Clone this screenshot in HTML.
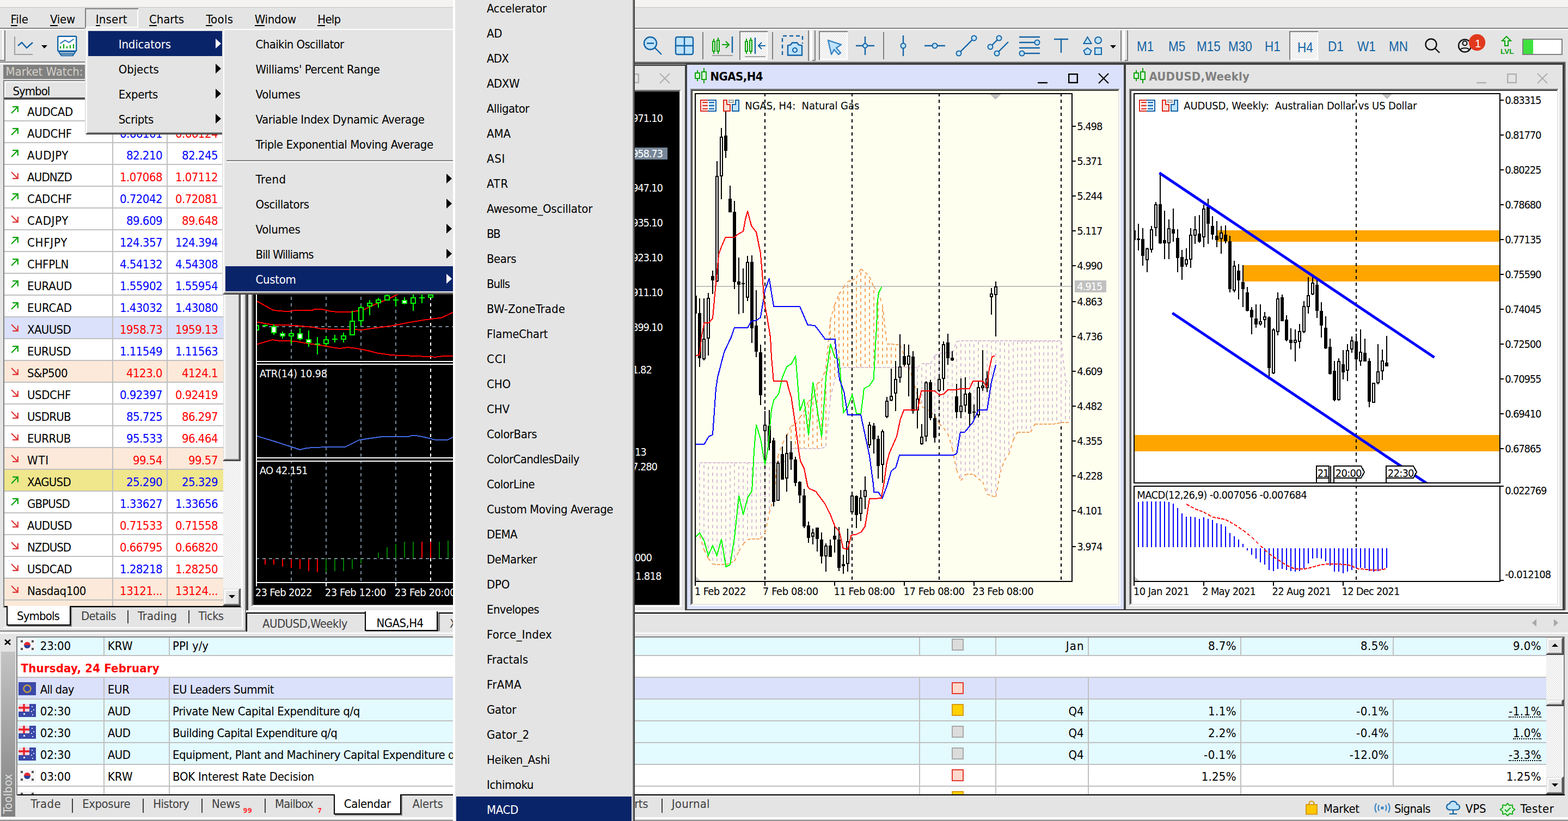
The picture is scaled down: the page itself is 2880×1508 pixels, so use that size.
<!DOCTYPE html>
<html lang="en"><head><meta charset="utf-8"><title>MetaTrader 5</title>
<style>
*{margin:0;padding:0;box-sizing:content-box}
html,body{width:2880px;height:1508px;overflow:hidden;background:#e4e4e4}
body{position:relative;font-family:'DejaVu Sans Condensed','Liberation Sans',sans-serif;font-size:22px;line-height:22px;color:#000;
 -webkit-font-smoothing:none;text-rendering:optimizeSpeed}
div,span,svg{position:absolute}
svg{overflow:visible}
.t{white-space:nowrap}
.c{font-size:20px;line-height:20px}
</style></head>
<body>
<div style="left:0px;top:0px;width:2880px;height:13px;background:#f5f2f2;"></div>
<div style="left:0px;top:12.5px;width:2880px;height:1.5px;background:#c4c4c4;"></div>
<div style="left:0px;top:14px;width:2880px;height:38px;background:#e4e4e4;"></div>
<div style="left:0px;top:51px;width:2880px;height:2px;background:#808080;"></div>
<div style="left:0px;top:53px;width:2880px;height:2px;background:#ffffff;"></div>
<div style="left:156px;top:15px;width:98px;height:36px;background:#e4e4e4;box-shadow:inset 2px 2px 0 #808080, inset -2px -2px 0 #fff;"></div>
<span class="t" style="top:24.6px;left:19.6px;letter-spacing:-0.24px;">File</span>
<div style="left:19.6px;top:45.9px;width:12px;height:2px;background:#000;"></div>
<span class="t" style="top:24.6px;left:92px;letter-spacing:-0.23px;">View</span>
<div style="left:92px;top:45.9px;width:14px;height:2px;background:#000;"></div>
<span class="t" style="top:24.6px;left:175.8px;letter-spacing:0.21px;">Insert</span>
<div style="left:175.8px;top:45.9px;width:8px;height:2px;background:#000;"></div>
<span class="t" style="top:24.6px;left:274px;letter-spacing:-0.12px;">Charts</span>
<div style="left:274px;top:45.9px;width:14px;height:2px;background:#000;"></div>
<span class="t" style="top:24.6px;left:378.4px;letter-spacing:0.33px;">Tools</span>
<div style="left:378.4px;top:45.9px;width:12px;height:2px;background:#000;"></div>
<span class="t" style="top:24.6px;left:467.8px;letter-spacing:-0.33px;">Window</span>
<div style="left:467.8px;top:45.9px;width:18px;height:2px;background:#000;"></div>
<span class="t" style="top:24.6px;left:583.3px;letter-spacing:-0.79px;">Help</span>
<div style="left:583.3px;top:45.9px;width:14px;height:2px;background:#000;"></div>
<div style="left:0px;top:55px;width:2880px;height:58px;background:#e4e4e4;"></div>
<div style="left:4px;top:56px;width:2px;height:56px;background:#fff;"></div><div style="left:8px;top:56px;width:2px;height:56px;background:#808080;"></div><div style="left:0px;top:110px;width:8px;height:2px;background:#808080;"></div>
<div style="left:1358px;top:57px;width:52px;height:53px;background:repeating-conic-gradient(#fff 0 25%,#e4e4e4 0 50%) 0 0/4px 4px;box-shadow:inset 2px 2px 0 #808080, inset -2px -2px 0 #fff;"></div>
<div style="left:1504px;top:57px;width:53px;height:53px;background:repeating-conic-gradient(#fff 0 25%,#e4e4e4 0 50%) 0 0/4px 4px;box-shadow:inset 2px 2px 0 #808080, inset -2px -2px 0 #fff;"></div>
<div style="left:2368px;top:57px;width:53px;height:53px;background:repeating-conic-gradient(#fff 0 25%,#e4e4e4 0 50%) 0 0/4px 4px;box-shadow:inset 2px 2px 0 #808080, inset -2px -2px 0 #fff;"></div>
<div style="left:1290px;top:59px;width:2px;height:50px;background:#808080;"></div>
<div style="left:1418px;top:59px;width:2px;height:50px;background:#808080;"></div>
<div style="left:1622px;top:59px;width:2px;height:50px;background:#808080;"></div>
<div style="left:1484px;top:56px;width:2px;height:56px;background:#808080;"></div><div style="left:1488px;top:56px;width:4px;height:54px;background:#fff;"></div><div style="left:1492px;top:110px;width:4px;height:2px;background:#808080;"></div><div style="left:1496px;top:56px;width:2px;height:56px;background:#808080;"></div>
<div style="left:2058px;top:56px;width:2px;height:56px;background:#808080;"></div><div style="left:2062px;top:56px;width:4px;height:54px;background:#fff;"></div><div style="left:2066px;top:110px;width:4px;height:2px;background:#808080;"></div><div style="left:2070px;top:56px;width:2px;height:56px;background:#808080;"></div>
<svg style="left:0;top:55px" width="2880" height="58" viewBox="0 55 2880 58" fill="none" stroke-linecap="butt"><path d="M27 67V100H60" stroke="#a0a0a0" stroke-width="2"/><path d="M33 84L40 78L49 88L60 78" stroke="#1464a5" stroke-width="2.4"/><path d="M76 83H87L81.5 89Z" fill="#000"/><rect x="106.2" y="66.7" width="34" height="27" rx="1.5" fill="#fff" stroke="#1464a5" stroke-width="2.4"/><path d="M108 95.200h30.400l-2 3.600h-26.400z" fill="#fdeee6" stroke="#1464a5" stroke-width="2"/><path d="M111 99.200h24.400l-1.500 3h-21.400z" fill="#fdeee6" stroke="#1464a5" stroke-width="2"/><path d="M110.500 80l8.800-6 7.400 4 8.700-6.300" stroke="#3a7fc0" stroke-width="2.2"/><path d="M111 89v-4M117 89v-8M123 89v-4M129 89v-6M135 89v-8" stroke="#0da20d" stroke-width="2.2"/><circle cx="1194.5" cy="79.5" r="11.5" fill="#bfe3fb" stroke="#1464a5" stroke-width="2.4"/><path d="M1203 88l12 12M1188 79.5h13" stroke="#1464a5" stroke-width="2.4"/><rect x="1241" y="68" width="32" height="32" rx="3" fill="#bfe3fb" stroke="#1464a5" stroke-width="2.4"/><path d="M1257 68v32M1241 84h32" stroke="#1464a5" stroke-width="2.4"/><path d="M1311 71v28M1319 69v30" stroke="#0da20d" stroke-width="2"/><rect x="1309" y="76" width="4" height="18" fill="#d8f5d8" stroke="#0da20d" stroke-width="2"/><rect x="1317" y="74" width="4" height="20" fill="#d8f5d8" stroke="#0da20d" stroke-width="2"/><path d="M1326 82h13M1333 76l6 6-6 6" stroke="#0da20d" stroke-width="2.2"/><path d="M1345 67v30" stroke="#1464a5" stroke-width="2.4"/><path d="M1308 102h38" stroke="#a0a0a0" stroke-width="2"/><path d="M1371 71v28M1379 69v30" stroke="#0da20d" stroke-width="2"/><rect x="1369" y="76" width="4" height="18" fill="#d8f5d8" stroke="#0da20d" stroke-width="2"/><rect x="1377" y="74" width="4" height="20" fill="#d8f5d8" stroke="#0da20d" stroke-width="2"/><path d="M1387 69v30" stroke="#1464a5" stroke-width="2.4"/><path d="M1393 84h13M1399 78l-6 6 6 6" stroke="#1464a5" stroke-width="2.2"/><path d="M1368 104h38" stroke="#a0a0a0" stroke-width="2"/><path d="M1437 101V66h37v14" stroke="#1464a5" stroke-width="2.4" stroke-dasharray="7 5"/><path d="M1447 101.5h26v-18l-6-1-3-4h-9l-3 4-5 1z" fill="#bfe3fb" stroke="#1464a5" stroke-width="2.4"/><circle cx="1460" cy="92" r="4" fill="#bfe3fb" stroke="#1464a5" stroke-width="2.2"/><path d="M1521 74l24 8-9 6 8 9-4 3-8-9-5 9z" fill="#bfe3fb" stroke="#3a86c4" stroke-width="2.4" stroke-linejoin="round"/><path d="M1572 84h34M1589 67v34" stroke="#1464a5" stroke-width="2.4"/><circle cx="1589" cy="84" r="4" fill="#bfe3fb" stroke="#1464a5" stroke-width="2"/><path d="M1659 65v38" stroke="#1464a5" stroke-width="2.4"/><circle cx="1659" cy="84" r="4.5" fill="#bfe3fb" stroke="#1464a5" stroke-width="2"/><path d="M1698 84h38" stroke="#1464a5" stroke-width="2.4"/><circle cx="1717" cy="84" r="4.5" fill="#bfe3fb" stroke="#1464a5" stroke-width="2"/><path d="M1761 98L1789 70" stroke="#1464a5" stroke-width="2.4"/><circle cx="1761" cy="98" r="4.5" fill="#bfe3fb" stroke="#1464a5" stroke-width="2"/><circle cx="1789" cy="70" r="4.5" fill="#bfe3fb" stroke="#1464a5" stroke-width="2"/><path d="M1819 86L1835 70M1831 98L1852 77" stroke="#1464a5" stroke-width="2.4"/><circle cx="1819" cy="86" r="4.5" fill="#bfe3fb" stroke="#1464a5" stroke-width="2"/><circle cx="1835" cy="70" r="4.5" fill="#bfe3fb" stroke="#1464a5" stroke-width="2"/><circle cx="1831" cy="98" r="4.5" fill="#bfe3fb" stroke="#1464a5" stroke-width="2"/><path d="M1872 68h38M1872 78h38M1872 88h38M1872 98h38" stroke="#1464a5" stroke-width="2.4"/><circle cx="1905" cy="78" r="4.5" fill="#bfe3fb" stroke="#1464a5" stroke-width="2"/><circle cx="1877" cy="98" r="4.5" fill="#bfe3fb" stroke="#1464a5" stroke-width="2"/><path d="M1936 72h26M1949 72v25" stroke="#1464a5" stroke-width="2.4"/><path d="M1997.5 68l7 12h-14z" fill="#bfe3fb" stroke="#1464a5" stroke-width="2"/><circle cx="2017" cy="74" r="6" fill="#bfe3fb" stroke="#1464a5" stroke-width="2"/><path d="M1997.5 88l7 5-3 7h-8l-3-7z" fill="#bfe3fb" stroke="#1464a5" stroke-width="2"/><rect x="2011" y="88" width="12" height="12" fill="#bfe3fb" stroke="#1464a5" stroke-width="2"/><path d="M2039 83H2050L2044.5 89Z" fill="#000"/><circle cx="2628.5" cy="81.5" r="10" stroke="#111" stroke-width="2.4"/><path d="M2636 89l8 8" stroke="#111" stroke-width="2.4"/><circle cx="2690.5" cy="84" r="11.5" stroke="#111" stroke-width="2.4"/><circle cx="2690.5" cy="79.5" r="4" stroke="#111" stroke-width="2.2"/><path d="M2682 92c2-5 15-5 17 0" stroke="#111" stroke-width="2.2"/><circle cx="2713" cy="78" r="15.2" fill="#e0391d"/><path d="M2767 67l8 8h-5v9h-6v-9h-5z" fill="#d8f5d8" stroke="#0da20d" stroke-width="2"/></svg>
<span class="t" style="top:72.6px;left:2088px;color:#1464a5;font-size:25px;line-height:25px;font-family:'Liberation Sans',sans-serif;transform:scaleX(0.9);transform-origin:0 0;">M1</span>
<span class="t" style="top:72.6px;left:2146px;color:#1464a5;font-size:25px;line-height:25px;font-family:'Liberation Sans',sans-serif;transform:scaleX(0.9);transform-origin:0 0;">M5</span>
<span class="t" style="top:72.6px;left:2198px;color:#1464a5;font-size:25px;line-height:25px;font-family:'Liberation Sans',sans-serif;transform:scaleX(0.9);transform-origin:0 0;">M15</span>
<span class="t" style="top:72.6px;left:2256px;color:#1464a5;font-size:25px;line-height:25px;font-family:'Liberation Sans',sans-serif;transform:scaleX(0.9);transform-origin:0 0;">M30</span>
<span class="t" style="top:72.6px;left:2323px;color:#1464a5;font-size:25px;line-height:25px;font-family:'Liberation Sans',sans-serif;transform:scaleX(0.9);transform-origin:0 0;">H1</span>
<span class="t" style="top:74.6px;left:2383px;color:#1464a5;font-size:25px;line-height:25px;font-family:'Liberation Sans',sans-serif;transform:scaleX(0.9);transform-origin:0 0;">H4</span>
<span class="t" style="top:72.6px;left:2438.5px;color:#1464a5;font-size:25px;line-height:25px;font-family:'Liberation Sans',sans-serif;transform:scaleX(0.9);transform-origin:0 0;">D1</span>
<span class="t" style="top:72.6px;left:2493px;color:#1464a5;font-size:25px;line-height:25px;font-family:'Liberation Sans',sans-serif;transform:scaleX(0.9);transform-origin:0 0;">W1</span>
<span class="t" style="top:72.6px;left:2550.5px;color:#1464a5;font-size:25px;line-height:25px;font-family:'Liberation Sans',sans-serif;transform:scaleX(0.9);transform-origin:0 0;">MN</span>
<span class="t" style="top:69.9px;left:2709px;color:#fff;font-size:20px;line-height:20px;font-family:'Liberation Sans',sans-serif;">1</span>
<span class="t" style="top:88.4px;left:2756px;color:#0da20d;font-size:13.5px;line-height:13.5px;font-weight:bold;font-family:'Liberation Sans',sans-serif;">LVL</span>
<div style="left:2796px;top:71px;width:74px;height:30px;background:#fff;border:2px solid #808080;box-sizing:border-box;"></div>
<div style="left:2798px;top:73px;width:18px;height:26px;background:#3fe13f;"></div>
<div style="left:0px;top:113px;width:2880px;height:2px;background:#808080;"></div>
<div style="left:0px;top:115px;width:452px;height:1053px;background:#e4e4e4;"></div>
<div style="left:0px;top:115px;width:452px;height:3px;background:#fff;"></div>
<div style="left:6px;top:119px;width:440px;height:26px;background:#808080;"></div>
<span class="t" style="top:121.2px;left:10.5px;color:#d4d0c8;letter-spacing:-0.03px;">Market Watch:</span>
<div style="left:6px;top:147px;width:440px;height:970px;background:#808080;"></div>
<div style="left:8px;top:149px;width:436px;height:966px;background:#fff;"></div>
<div style="left:8px;top:149px;width:436px;height:31px;background:#e4e4e4;box-shadow:inset 2px 2px 0 #fff;"></div>
<span class="t" style="top:156.7px;left:23.4px;letter-spacing:-0.96px;">Symbol</span>
<div style="left:8px;top:179px;width:436px;height:4px;background:#505050;"></div>
<div style="left:8px;top:221px;width:402px;height:2px;background:#c0c0c0;"></div>
<svg style="left:20px;top:195px" width="14" height="14" viewBox="0 0 14 14"><path d="M1 13L12 2M3 1.2H12.8V11" fill="none" stroke="#0da20d" stroke-width="2.2"/></svg>
<span class="t" style="top:194.5px;left:50px;letter-spacing:-0.31px;">AUDCAD</span>
<span class="t" style="top:194.5px;right:2582.0px;color:#0000ff;letter-spacing:-0.55px;">0.92161</span>
<span class="t" style="top:194.5px;right:2480.0px;color:#0000ff;letter-spacing:-0.55px;">0.92202</span>
<div style="left:8px;top:261px;width:402px;height:2px;background:#c0c0c0;"></div>
<svg style="left:20px;top:235px" width="14" height="14" viewBox="0 0 14 14"><path d="M1 13L12 2M3 1.2H12.8V11" fill="none" stroke="#0da20d" stroke-width="2.2"/></svg>
<span class="t" style="top:234.5px;left:50px;letter-spacing:-0.23px;">AUDCHF</span>
<span class="t" style="top:234.5px;right:2582.0px;color:#0000ff;letter-spacing:-0.55px;">0.66101</span>
<span class="t" style="top:234.5px;right:2480.0px;color:#ff0000;letter-spacing:-0.55px;">0.66124</span>
<div style="left:8px;top:301px;width:402px;height:2px;background:#c0c0c0;"></div>
<svg style="left:20px;top:275px" width="14" height="14" viewBox="0 0 14 14"><path d="M1 13L12 2M3 1.2H12.8V11" fill="none" stroke="#0da20d" stroke-width="2.2"/></svg>
<span class="t" style="top:274.5px;left:50px;letter-spacing:0.56px;">AUDJPY</span>
<span class="t" style="top:274.5px;right:2582.0px;color:#0000ff;letter-spacing:-0.54px;">82.210</span>
<span class="t" style="top:274.5px;right:2480.0px;color:#0000ff;letter-spacing:-0.54px;">82.245</span>
<div style="left:8px;top:341px;width:402px;height:2px;background:#c0c0c0;"></div>
<svg style="left:20px;top:315px" width="14" height="14" viewBox="0 0 14 14"><path d="M1 1L12 12M3 12.8H12.8V3" fill="none" stroke="#e0393a" stroke-width="2.2"/></svg>
<span class="t" style="top:314.5px;left:50px;letter-spacing:-0.81px;">AUDNZD</span>
<span class="t" style="top:314.5px;right:2582.0px;color:#ff0000;letter-spacing:-0.55px;">1.07068</span>
<span class="t" style="top:314.5px;right:2480.0px;color:#ff0000;letter-spacing:-0.55px;">1.07112</span>
<div style="left:8px;top:381px;width:402px;height:2px;background:#c0c0c0;"></div>
<svg style="left:20px;top:355px" width="14" height="14" viewBox="0 0 14 14"><path d="M1 13L12 2M3 1.2H12.8V11" fill="none" stroke="#0da20d" stroke-width="2.2"/></svg>
<span class="t" style="top:354.5px;left:50px;letter-spacing:-0.12px;">CADCHF</span>
<span class="t" style="top:354.5px;right:2582.0px;color:#0000ff;letter-spacing:-0.55px;">0.72042</span>
<span class="t" style="top:354.5px;right:2480.0px;color:#ff0000;letter-spacing:-0.55px;">0.72081</span>
<div style="left:8px;top:421px;width:402px;height:2px;background:#c0c0c0;"></div>
<svg style="left:20px;top:395px" width="14" height="14" viewBox="0 0 14 14"><path d="M1 1L12 12M3 12.8H12.8V3" fill="none" stroke="#e0393a" stroke-width="2.2"/></svg>
<span class="t" style="top:394.5px;left:50px;letter-spacing:0.67px;">CADJPY</span>
<span class="t" style="top:394.5px;right:2582.0px;color:#0000ff;letter-spacing:-0.54px;">89.609</span>
<span class="t" style="top:394.5px;right:2480.0px;color:#ff0000;letter-spacing:-0.54px;">89.648</span>
<div style="left:8px;top:461px;width:402px;height:2px;background:#c0c0c0;"></div>
<svg style="left:20px;top:435px" width="14" height="14" viewBox="0 0 14 14"><path d="M1 13L12 2M3 1.2H12.8V11" fill="none" stroke="#0da20d" stroke-width="2.2"/></svg>
<span class="t" style="top:434.5px;left:50px;letter-spacing:0.75px;">CHFJPY</span>
<span class="t" style="top:434.5px;right:2582.0px;color:#0000ff;letter-spacing:-0.55px;">124.357</span>
<span class="t" style="top:434.5px;right:2480.0px;color:#0000ff;letter-spacing:-0.55px;">124.394</span>
<div style="left:8px;top:501px;width:402px;height:2px;background:#c0c0c0;"></div>
<svg style="left:20px;top:475px" width="14" height="14" viewBox="0 0 14 14"><path d="M1 13L12 2M3 1.2H12.8V11" fill="none" stroke="#0da20d" stroke-width="2.2"/></svg>
<span class="t" style="top:474.5px;left:50px;letter-spacing:-0.31px;">CHFPLN</span>
<span class="t" style="top:474.5px;right:2582.0px;color:#0000ff;letter-spacing:-0.55px;">4.54132</span>
<span class="t" style="top:474.5px;right:2480.0px;color:#0000ff;letter-spacing:-0.55px;">4.54308</span>
<div style="left:8px;top:541px;width:402px;height:2px;background:#c0c0c0;"></div>
<svg style="left:20px;top:515px" width="14" height="14" viewBox="0 0 14 14"><path d="M1 13L12 2M3 1.2H12.8V11" fill="none" stroke="#0da20d" stroke-width="2.2"/></svg>
<span class="t" style="top:514.5px;left:50px;letter-spacing:-0.19px;">EURAUD</span>
<span class="t" style="top:514.5px;right:2582.0px;color:#0000ff;letter-spacing:-0.55px;">1.55902</span>
<span class="t" style="top:514.5px;right:2480.0px;color:#0000ff;letter-spacing:-0.55px;">1.55954</span>
<div style="left:8px;top:581px;width:402px;height:2px;background:#c0c0c0;"></div>
<svg style="left:20px;top:555px" width="14" height="14" viewBox="0 0 14 14"><path d="M1 13L12 2M3 1.2H12.8V11" fill="none" stroke="#0da20d" stroke-width="2.2"/></svg>
<span class="t" style="top:554.5px;left:50px;letter-spacing:-0.04px;">EURCAD</span>
<span class="t" style="top:554.5px;right:2582.0px;color:#0000ff;letter-spacing:-0.55px;">1.43032</span>
<span class="t" style="top:554.5px;right:2480.0px;color:#0000ff;letter-spacing:-0.55px;">1.43080</span>
<div style="left:8px;top:583px;width:402px;height:38px;background:#dbe1fb;"></div>
<div style="left:8px;top:621px;width:402px;height:2px;background:#c0c0c0;"></div>
<svg style="left:20px;top:595px" width="14" height="14" viewBox="0 0 14 14"><path d="M1 1L12 12M3 12.8H12.8V3" fill="none" stroke="#e0393a" stroke-width="2.2"/></svg>
<span class="t" style="top:594.5px;left:50px;letter-spacing:-0.65px;">XAUUSD</span>
<span class="t" style="top:594.5px;right:2582.0px;color:#ff0000;letter-spacing:-0.55px;">1958.73</span>
<span class="t" style="top:594.5px;right:2480.0px;color:#ff0000;letter-spacing:-0.55px;">1959.13</span>
<div style="left:8px;top:661px;width:402px;height:2px;background:#c0c0c0;"></div>
<svg style="left:20px;top:635px" width="14" height="14" viewBox="0 0 14 14"><path d="M1 13L12 2M3 1.2H12.8V11" fill="none" stroke="#0da20d" stroke-width="2.2"/></svg>
<span class="t" style="top:634.5px;left:50px;letter-spacing:-0.51px;">EURUSD</span>
<span class="t" style="top:634.5px;right:2582.0px;color:#0000ff;letter-spacing:-0.55px;">1.11549</span>
<span class="t" style="top:634.5px;right:2480.0px;color:#0000ff;letter-spacing:-0.55px;">1.11563</span>
<div style="left:8px;top:663px;width:402px;height:38px;background:#fce9d9;"></div>
<div style="left:8px;top:701px;width:402px;height:2px;background:#c0c0c0;"></div>
<svg style="left:20px;top:675px" width="14" height="14" viewBox="0 0 14 14"><path d="M1 1L12 12M3 12.8H12.8V3" fill="none" stroke="#e0393a" stroke-width="2.2"/></svg>
<span class="t" style="top:674.5px;left:50px;letter-spacing:-0.62px;">S&amp;P500</span>
<span class="t" style="top:674.5px;right:2582.0px;color:#ff0000;letter-spacing:-0.54px;">4123.0</span>
<span class="t" style="top:674.5px;right:2480.0px;color:#ff0000;letter-spacing:-0.54px;">4124.1</span>
<div style="left:8px;top:741px;width:402px;height:2px;background:#c0c0c0;"></div>
<svg style="left:20px;top:715px" width="14" height="14" viewBox="0 0 14 14"><path d="M1 1L12 12M3 12.8H12.8V3" fill="none" stroke="#e0393a" stroke-width="2.2"/></svg>
<span class="t" style="top:714.5px;left:50px;letter-spacing:-0.40px;">USDCHF</span>
<span class="t" style="top:714.5px;right:2582.0px;color:#0000ff;letter-spacing:-0.55px;">0.92397</span>
<span class="t" style="top:714.5px;right:2480.0px;color:#ff0000;letter-spacing:-0.55px;">0.92419</span>
<div style="left:8px;top:781px;width:402px;height:2px;background:#c0c0c0;"></div>
<svg style="left:20px;top:755px" width="14" height="14" viewBox="0 0 14 14"><path d="M1 1L12 12M3 12.8H12.8V3" fill="none" stroke="#e0393a" stroke-width="2.2"/></svg>
<span class="t" style="top:754.5px;left:50px;letter-spacing:-0.69px;">USDRUB</span>
<span class="t" style="top:754.5px;right:2582.0px;color:#0000ff;letter-spacing:-0.54px;">85.725</span>
<span class="t" style="top:754.5px;right:2480.0px;color:#ff0000;letter-spacing:-0.54px;">86.297</span>
<div style="left:8px;top:821px;width:402px;height:2px;background:#c0c0c0;"></div>
<svg style="left:20px;top:795px" width="14" height="14" viewBox="0 0 14 14"><path d="M1 1L12 12M3 12.8H12.8V3" fill="none" stroke="#e0393a" stroke-width="2.2"/></svg>
<span class="t" style="top:794.5px;left:50px;letter-spacing:-0.43px;">EURRUB</span>
<span class="t" style="top:794.5px;right:2582.0px;color:#0000ff;letter-spacing:-0.54px;">95.533</span>
<span class="t" style="top:794.5px;right:2480.0px;color:#ff0000;letter-spacing:-0.54px;">96.464</span>
<div style="left:8px;top:823px;width:402px;height:38px;background:#fce9d9;"></div>
<div style="left:8px;top:861px;width:402px;height:2px;background:#c0c0c0;"></div>
<svg style="left:20px;top:835px" width="14" height="14" viewBox="0 0 14 14"><path d="M1 1L12 12M3 12.8H12.8V3" fill="none" stroke="#e0393a" stroke-width="2.2"/></svg>
<span class="t" style="top:834.5px;left:50px;letter-spacing:0.83px;">WTI</span>
<span class="t" style="top:834.5px;right:2582.0px;color:#ff0000;letter-spacing:-0.53px;">99.54</span>
<span class="t" style="top:834.5px;right:2480.0px;color:#ff0000;letter-spacing:-0.53px;">99.57</span>
<div style="left:8px;top:863px;width:402px;height:38px;background:#f0e68c;"></div>
<div style="left:8px;top:901px;width:402px;height:2px;background:#c0c0c0;"></div>
<svg style="left:20px;top:875px" width="14" height="14" viewBox="0 0 14 14"><path d="M1 13L12 2M3 1.2H12.8V11" fill="none" stroke="#0da20d" stroke-width="2.2"/></svg>
<span class="t" style="top:874.5px;left:50px;letter-spacing:-0.73px;">XAGUSD</span>
<span class="t" style="top:874.5px;right:2582.0px;color:#0000ff;letter-spacing:-0.54px;">25.290</span>
<span class="t" style="top:874.5px;right:2480.0px;color:#0000ff;letter-spacing:-0.54px;">25.329</span>
<div style="left:8px;top:941px;width:402px;height:2px;background:#c0c0c0;"></div>
<svg style="left:20px;top:915px" width="14" height="14" viewBox="0 0 14 14"><path d="M1 13L12 2M3 1.2H12.8V11" fill="none" stroke="#0da20d" stroke-width="2.2"/></svg>
<span class="t" style="top:914.5px;left:50px;letter-spacing:-0.86px;">GBPUSD</span>
<span class="t" style="top:914.5px;right:2582.0px;color:#0000ff;letter-spacing:-0.55px;">1.33627</span>
<span class="t" style="top:914.5px;right:2480.0px;color:#0000ff;letter-spacing:-0.55px;">1.33656</span>
<div style="left:8px;top:981px;width:402px;height:2px;background:#c0c0c0;"></div>
<svg style="left:20px;top:955px" width="14" height="14" viewBox="0 0 14 14"><path d="M1 1L12 12M3 12.8H12.8V3" fill="none" stroke="#e0393a" stroke-width="2.2"/></svg>
<span class="t" style="top:954.5px;left:50px;letter-spacing:-0.60px;">AUDUSD</span>
<span class="t" style="top:954.5px;right:2582.0px;color:#ff0000;letter-spacing:-0.55px;">0.71533</span>
<span class="t" style="top:954.5px;right:2480.0px;color:#ff0000;letter-spacing:-0.55px;">0.71558</span>
<div style="left:8px;top:1021px;width:402px;height:2px;background:#c0c0c0;"></div>
<svg style="left:20px;top:995px" width="14" height="14" viewBox="0 0 14 14"><path d="M1 1L12 12M3 12.8H12.8V3" fill="none" stroke="#e0393a" stroke-width="2.2"/></svg>
<span class="t" style="top:994.5px;left:50px;letter-spacing:-0.98px;">NZDUSD</span>
<span class="t" style="top:994.5px;right:2582.0px;color:#ff0000;letter-spacing:-0.55px;">0.66795</span>
<span class="t" style="top:994.5px;right:2480.0px;color:#ff0000;letter-spacing:-0.55px;">0.66820</span>
<div style="left:8px;top:1061px;width:402px;height:2px;background:#c0c0c0;"></div>
<svg style="left:20px;top:1035px" width="14" height="14" viewBox="0 0 14 14"><path d="M1 1L12 12M3 12.8H12.8V3" fill="none" stroke="#e0393a" stroke-width="2.2"/></svg>
<span class="t" style="top:1034.5px;left:50px;letter-spacing:-0.48px;">USDCAD</span>
<span class="t" style="top:1034.5px;right:2582.0px;color:#0000ff;letter-spacing:-0.55px;">1.28218</span>
<span class="t" style="top:1034.5px;right:2480.0px;color:#ff0000;letter-spacing:-0.55px;">1.28250</span>
<div style="left:8px;top:1063px;width:402px;height:38px;background:#fce9d9;"></div>
<div style="left:8px;top:1101px;width:402px;height:2px;background:#c0c0c0;"></div>
<svg style="left:20px;top:1075px" width="14" height="14" viewBox="0 0 14 14"><path d="M1 1L12 12M3 12.8H12.8V3" fill="none" stroke="#e0393a" stroke-width="2.2"/></svg>
<span class="t" style="top:1074.5px;left:50px;letter-spacing:-0.48px;">Nasdaq100</span>
<span class="t" style="top:1074.5px;right:2582.0px;color:#ff0000;letter-spacing:-0.48px;">13121...</span>
<span class="t" style="top:1074.5px;right:2480.0px;color:#ff0000;letter-spacing:-0.48px;">13124...</span>
<div style="left:8px;top:1103px;width:402px;height:10px;background:#fce9d9;"></div>
<div style="left:206px;top:183px;width:2px;height:930px;background:#c0c0c0;"></div>
<div style="left:306px;top:183px;width:2px;height:930px;background:#c0c0c0;"></div>
<div style="left:410px;top:183px;width:32px;height:930px;background:repeating-conic-gradient(#fff 0 25%,#e4e4e4 0 50%) 0 0/4px 4px;"></div>
<div style="left:410px;top:183px;width:32px;height:664px;background:#e4e4e4;box-shadow:inset -2px -2px 0 #404040, inset 2px 2px 0 #e4e4e4, inset -4px -4px 0 #808080, inset 4px 4px 0 #fff;"></div>
<div style="left:410px;top:1081px;width:32px;height:32px;background:#e4e4e4;box-shadow:inset -2px -2px 0 #404040, inset 2px 2px 0 #e4e4e4, inset -4px -4px 0 #808080, inset 4px 4px 0 #fff;"></div>
<svg style="left:418px;top:1092px" width="16" height="10"><path d="M2 1H14L8 7Z" fill="#000"/></svg>
<div style="left:8px;top:1113px;width:434px;height:2px;background:#000;"></div>
<div style="left:6px;top:1116px;width:440px;height:36px;background:#e4e4e4;"></div>
<div style="left:12px;top:1113px;width:118px;height:36px;background:#fff;border:2px solid #000;border-top:none;box-sizing:border-box;box-shadow:2px 2px 0 #808080;"></div>
<span class="t" style="top:1121.2px;left:31px;letter-spacing:-0.86px;">Symbols</span>
<span class="t" style="top:1121.2px;left:149px;color:#404040;letter-spacing:-0.66px;">Details</span>
<span class="t" style="top:1121.2px;left:253px;color:#404040;letter-spacing:-0.04px;">Trading</span>
<span class="t" style="top:1121.2px;left:364.5px;color:#404040;letter-spacing:-0.72px;">Ticks</span>
<div style="left:234px;top:1121px;width:2px;height:24px;background:#404040;"></div>
<div style="left:346px;top:1121px;width:2px;height:24px;background:#404040;"></div>
<div style="left:444px;top:119px;width:2px;height:1034px;background:#fff;"></div>
<div style="left:6px;top:1152px;width:440px;height:2px;background:#fff;"></div>
<div style="left:0px;top:1158px;width:452px;height:2px;background:#808080;"></div>
<div style="left:450px;top:115px;width:2px;height:1045px;background:#808080;"></div>
<div style="left:452px;top:113px;width:2428px;height:2px;background:#909090;"></div>
<div style="left:452px;top:115px;width:2428px;height:1006px;background:#404040;"></div>
<div style="left:2874px;top:115px;width:2px;height:1006px;background:#808080;"></div>
<div style="left:2876px;top:113px;width:4px;height:1010px;background:#e4e4e4;"></div>
<div style="left:452px;top:115px;width:4px;height:1006px;background:#404040;"></div>
<div style="left:452px;top:1121px;width:2428px;height:40px;background:#e4e4e4;"></div>
<div style="left:452px;top:1121px;width:2428px;height:2px;background:#fff;"></div>
<div style="left:452px;top:1125px;width:2428px;height:2px;background:#000;"></div>
<div style="left:670px;top:1123px;width:134px;height:36px;background:#fff;border:2px solid #000;border-top:none;box-sizing:border-box;box-shadow:2px 2px 0 #808080;"></div>
<div style="left:452px;top:1125px;width:2px;height:36px;background:#000;"></div>
<span class="t" style="top:1134.7px;left:482px;color:#404040;letter-spacing:-0.55px;">AUDUSD,Weekly</span>
<span class="t" style="top:1133.7px;left:691.5px;letter-spacing:-0.57px;">NGAS,H4</span>
<span class="t" style="top:1134.7px;left:826px;color:#404040;letter-spacing:-0.63px;">XAUUSD,H4</span>
<div style="left:806px;top:1127px;width:2px;height:32px;background:#808080;"></div>
<div style="left:456px;top:117px;width:804px;height:2px;background:#808080;"></div><div style="left:456px;top:119px;width:804px;height:2px;background:#404040;"></div><div style="left:456px;top:121px;width:802px;height:1000px;background:#e4e4e4;"></div><svg style="left:470px;top:126px" width="24" height="30" viewBox="0 0 24 30" shape-rendering="crispEdges"><path d="M5 5v20M17 1v28" stroke="#0da20d" stroke-width="2"/><rect x="1" y="10" width="8" height="10" fill="#d8fbd8" stroke="#0da20d" stroke-width="2"/><rect x="13" y="8" width="8" height="14" fill="#d8fbd8" stroke="#0da20d" stroke-width="2"/></svg><span class="t" style="top:132.1px;left:498.5px;color:#808080;font-weight:bold;">XAUUSD,H4</span><svg style="left:1100px;top:133px" width="140" height="24" viewBox="0 0 140 24" fill="none" stroke="#b0b0b0" stroke-width="2.4"><path d="M0 19h18"/><rect x="57.2" y="3.200" width="15.600" height="15.600"/><path d="M112 2l18 18M130 2l-18 18" stroke-width="2.2"/></svg><div style="left:462px;top:165px;width:790px;height:950px;background:#000;box-shadow:inset -2px -2px 0 #fff, inset 2px 2px 0 #808080, inset -4px -4px 0 #e4e4e4, inset 4px 4px 0 #404040;"></div><svg style="left:466px;top:169px;overflow:hidden" width="782" height="942" viewBox="466 169 782 942" shape-rendering="crispEdges"><path d="M471 171V1077M471 664H1150M471 669H1150M471 841H1150M471 847H1150M471 1070H1150" stroke="#fff" stroke-width="2" fill="none"/><defs><clipPath id="xac"><rect x="472" y="173" width="680" height="896"/></clipPath></defs><g clip-path="url(#xac)"><path d="M535 171V662" stroke="#778899" stroke-width="2" stroke-dasharray="6 6" stroke-dashoffset="10"/><path d="M535 670V842" stroke="#778899" stroke-width="2" stroke-dasharray="6 6" stroke-dashoffset="5"/><path d="M535 848V1068" stroke="#778899" stroke-width="2" stroke-dasharray="6 6" stroke-dashoffset="3"/><path d="M599 171V662" stroke="#778899" stroke-width="2" stroke-dasharray="6 6" stroke-dashoffset="10"/><path d="M599 670V842" stroke="#778899" stroke-width="2" stroke-dasharray="6 6" stroke-dashoffset="5"/><path d="M599 848V1068" stroke="#778899" stroke-width="2" stroke-dasharray="6 6" stroke-dashoffset="3"/><path d="M663 171V662" stroke="#778899" stroke-width="2" stroke-dasharray="6 6" stroke-dashoffset="10"/><path d="M663 670V842" stroke="#778899" stroke-width="2" stroke-dasharray="6 6" stroke-dashoffset="5"/><path d="M663 848V1068" stroke="#778899" stroke-width="2" stroke-dasharray="6 6" stroke-dashoffset="3"/><path d="M727 171V662" stroke="#778899" stroke-width="2" stroke-dasharray="6 6" stroke-dashoffset="10"/><path d="M727 670V842" stroke="#778899" stroke-width="2" stroke-dasharray="6 6" stroke-dashoffset="5"/><path d="M727 848V1068" stroke="#778899" stroke-width="2" stroke-dasharray="6 6" stroke-dashoffset="3"/><path d="M791 171V662" stroke="#fff" stroke-width="2" stroke-dasharray="6 6" stroke-dashoffset="10"/><path d="M791 670V842" stroke="#fff" stroke-width="2" stroke-dasharray="6 6" stroke-dashoffset="5"/><path d="M791 848V1068" stroke="#fff" stroke-width="2" stroke-dasharray="6 6" stroke-dashoffset="3"/><path d="M472 600H1150" stroke="#778899" stroke-width="2" stroke-dasharray="6 6" stroke-dashoffset="2"/><path d="M472 1026H1150" stroke="#778899" stroke-width="2" stroke-dasharray="6 6" stroke-dashoffset="2"/><polyline points="472.3,553.4 502.3,570.0 529.0,572.3 542.3,570.0 573.5,570.0 577.9,567.8 591.3,567.8 609.1,572.3 640.2,573.4 666.9,569.4 689.1,558.9 711.4,550.0 729.2,541.1 747.0,533.3" fill="none" stroke="#ff0000" stroke-width="2" /><polyline points="472.3,591.6 502.3,596.7 542.3,597.8 575.7,601.2 591.3,604.1 622.4,605.2 666.9,605.6 686.9,602.7 720.3,598.3 751.4,592.3 778.1,587.8 811.5,583.4 831.5,574.0" fill="none" stroke="#ff0000" stroke-width="2" /><polyline points="472.3,632.3 500.1,624.1 511.2,625.6 542.3,626.8 560.1,630.1 591.3,634.5 609.1,637.9 624.6,640.1 638.0,637.9 655.8,640.1 678.0,644.6 693.6,648.6 720.3,652.3 751.4,653.5 800.4,655.7 813.7,654.1 831.5,654.1" fill="none" stroke="#ff0000" stroke-width="2" /><path d="M471 596V608" stroke="#00ff00" stroke-width="2"/><rect x="467.0" y="598" width="8" height="8" fill="#000" stroke="#00ff00" stroke-width="2"/><path d="M487 596V600" stroke="#00ff00" stroke-width="2"/><rect x="482.0" y="597" width="10" height="2" fill="#00ff00"/><path d="M503 596V615" stroke="#00ff00" stroke-width="2"/><rect x="499.0" y="600" width="8" height="11" fill="#fff" stroke="#00ff00" stroke-width="2"/><path d="M519 609V622" stroke="#00ff00" stroke-width="2"/><rect x="515.0" y="613" width="8" height="4" fill="#fff" stroke="#00ff00" stroke-width="2"/><path d="M535 609V631" stroke="#00ff00" stroke-width="2"/><rect x="531.0" y="613" width="8" height="4" fill="#000" stroke="#00ff00" stroke-width="2"/><path d="M551 603V625" stroke="#00ff00" stroke-width="2"/><rect x="547.0" y="613" width="8" height="9" fill="#fff" stroke="#00ff00" stroke-width="2"/><path d="M567 607V637" stroke="#00ff00" stroke-width="2"/><rect x="563.0" y="624" width="8" height="5" fill="#fff" stroke="#00ff00" stroke-width="2"/><path d="M583 619V651" stroke="#00ff00" stroke-width="2"/><rect x="578.0" y="631" width="10" height="2" fill="#00ff00"/><path d="M599 617V635" stroke="#00ff00" stroke-width="2"/><rect x="595.0" y="624" width="8" height="7" fill="#000" stroke="#00ff00" stroke-width="2"/><path d="M615 615V629" stroke="#00ff00" stroke-width="2"/><rect x="610.0" y="622" width="10" height="2" fill="#00ff00"/><path d="M631 611V629" stroke="#00ff00" stroke-width="2"/><rect x="627.0" y="617" width="8" height="6" fill="#000" stroke="#00ff00" stroke-width="2"/><path d="M647 571V616" stroke="#00ff00" stroke-width="2"/><rect x="643.0" y="590" width="8" height="25" fill="#000" stroke="#00ff00" stroke-width="2"/><path d="M663 561V598" stroke="#00ff00" stroke-width="2"/><rect x="659.0" y="565" width="8" height="24" fill="#000" stroke="#00ff00" stroke-width="2"/><path d="M679 551V579" stroke="#00ff00" stroke-width="2"/><rect x="675.0" y="557" width="8" height="5" fill="#000" stroke="#00ff00" stroke-width="2"/><path d="M695 547V565" stroke="#00ff00" stroke-width="2"/><rect x="691.0" y="551" width="8" height="5" fill="#000" stroke="#00ff00" stroke-width="2"/><path d="M711 533V552" stroke="#00ff00" stroke-width="2"/><rect x="707.0" y="543" width="8" height="8" fill="#000" stroke="#00ff00" stroke-width="2"/><path d="M727 546V563" stroke="#00ff00" stroke-width="2"/><rect x="722.0" y="550" width="10" height="2" fill="#00ff00"/><path d="M743 546V559" stroke="#00ff00" stroke-width="2"/><rect x="739.0" y="552" width="8" height="5" fill="#fff" stroke="#00ff00" stroke-width="2"/><path d="M759 541V571" stroke="#00ff00" stroke-width="2"/><rect x="755.0" y="547" width="8" height="10" fill="#000" stroke="#00ff00" stroke-width="2"/><path d="M775 541V557" stroke="#00ff00" stroke-width="2"/><rect x="770.0" y="546" width="10" height="2" fill="#00ff00"/><path d="M791 533V546" stroke="#00ff00" stroke-width="2"/><rect x="787.0" y="542" width="8" height="4" fill="#000" stroke="#00ff00" stroke-width="2"/><polyline points="472.0,801.0 502.0,810.0 533.0,820.0 551.0,826.0 565.0,822.7 600.0,821.0 634.0,821.0 660.0,808.0 702.0,802.0 751.0,802.0 756.0,800.0 765.0,800.0 782.0,803.6 800.0,808.0 822.0,808.0 834.0,802.0" fill="none" stroke="#4169e1" stroke-width="2" /><path d="M487 1026.9V1036.9" stroke="#ff0000" stroke-width="2"/><path d="M503 1026.9V1036.9" stroke="#ff0000" stroke-width="2"/><path d="M519 1026.9V1040.9" stroke="#ff0000" stroke-width="2"/><path d="M535 1026.9V1042.9" stroke="#ff0000" stroke-width="2"/><path d="M551 1026.9V1044.6" stroke="#ff0000" stroke-width="2"/><path d="M567 1026.9V1048.6" stroke="#ff0000" stroke-width="2"/><path d="M583 1026.9V1050.6" stroke="#ff0000" stroke-width="2"/><path d="M599 1026.9V1050.6" stroke="#008000" stroke-width="2"/><path d="M615 1026.9V1048.6" stroke="#008000" stroke-width="2"/><path d="M631 1026.9V1048.6" stroke="#008000" stroke-width="2"/><path d="M647 1026.9V1044.6" stroke="#008000" stroke-width="2"/><path d="M663 1026.9V1034.6" stroke="#008000" stroke-width="2"/><path d="M695 1015.3V1025.1" stroke="#008000" stroke-width="2"/><path d="M711 1005.1V1025.1" stroke="#008000" stroke-width="2"/><path d="M727 999.0V1025.1" stroke="#008000" stroke-width="2"/><path d="M743 995.3V1025.1" stroke="#008000" stroke-width="2"/><path d="M759 995.3V1025.1" stroke="#008000" stroke-width="2"/><path d="M775 995.3V1025.1" stroke="#ff0000" stroke-width="2"/><path d="M791 995.3V1025.1" stroke="#ff0000" stroke-width="2"/><path d="M807 995.3V1025.1" stroke="#008000" stroke-width="2"/><path d="M823 993.0V1025.1" stroke="#008000" stroke-width="2"/></g><path d="M599 1070V1077M727 1070V1077" stroke="#fff" stroke-width="2"/></svg><span class="t c" style="top:675.6px;left:476.8px;color:#fff;letter-spacing:-0.34px;">ATR(14) 10.98</span><span class="t c" style="top:853.6px;left:476.8px;color:#fff;letter-spacing:-0.75px;">AO 42.151</span><span class="t c" style="top:1078.1px;left:468.8px;color:#fff;letter-spacing:-0.71px;">23 Feb 2022</span><span class="t c" style="top:1078.1px;left:596.8px;color:#fff;letter-spacing:-0.49px;">23 Feb 12:00</span><span class="t c" style="top:1078.1px;left:724.8px;color:#fff;letter-spacing:-0.49px;">23 Feb 20:00</span><div style="left:1146px;top:271px;width:80px;height:22px;background:#778899;"></div><span class="t c" style="top:207.1px;left:1150.8px;color:#fff;letter-spacing:-1.20px;">1971.10</span><span class="t c" style="top:272.1px;left:1150.8px;color:#fff;letter-spacing:-1.20px;">1958.73</span><span class="t c" style="top:335.1px;left:1150.8px;color:#fff;letter-spacing:-1.20px;">1947.10</span><span class="t c" style="top:399.1px;left:1150.8px;color:#fff;letter-spacing:-1.20px;">1935.10</span><span class="t c" style="top:463.1px;left:1150.8px;color:#fff;letter-spacing:-1.20px;">1923.10</span><span class="t c" style="top:527.1px;left:1150.8px;color:#fff;letter-spacing:-1.20px;">1911.10</span><span class="t c" style="top:591.1px;left:1150.8px;color:#fff;letter-spacing:-1.20px;">1899.10</span><span class="t c" style="top:669.1px;left:1150.8px;color:#fff;letter-spacing:-1.10px;">11.82</span><span class="t c" style="top:820.1px;left:1150.8px;color:#fff;letter-spacing:-1.02px;">4.13</span><span class="t c" style="top:847.1px;left:1150.8px;color:#fff;letter-spacing:-1.16px;">67.280</span><span class="t c" style="top:1014.1px;left:1150.8px;color:#fff;letter-spacing:-1.10px;">0.000</span><span class="t c" style="top:1048.1px;left:1150.8px;color:#fff;letter-spacing:-0.78px;">-11.818</span>
<div style="left:1262px;top:119px;width:802px;height:1000px;background:#dbe1fb;"></div><svg style="left:1276px;top:124px" width="24" height="30" viewBox="0 0 24 30" shape-rendering="crispEdges"><path d="M5 5v20M17 1v28" stroke="#0da20d" stroke-width="2"/><rect x="1" y="10" width="8" height="10" fill="#d8fbd8" stroke="#0da20d" stroke-width="2"/><rect x="13" y="8" width="8" height="14" fill="#d8fbd8" stroke="#0da20d" stroke-width="2"/></svg><span class="t" style="top:130.1px;left:1304.5px;color:#000;font-weight:bold;letter-spacing:-0.54px;">NGAS,H4</span><svg style="left:1906px;top:133px" width="140" height="24" viewBox="0 0 140 24" fill="none" stroke="#000" stroke-width="2.4"><path d="M0 19h18"/><rect x="57.2" y="3.200" width="15.600" height="15.600"/><path d="M112 2l18 18M130 2l-18 18" stroke-width="2.2"/></svg><div style="left:1268px;top:163px;width:790px;height:950px;background:#fffff0;box-shadow:inset -2px -2px 0 #fff, inset 2px 2px 0 #808080, inset -4px -4px 0 #e4e4e4, inset 4px 4px 0 #404040;"></div><svg style="left:1272px;top:167px;overflow:hidden" width="782" height="942" viewBox="1272 167 782 942" shape-rendering="crispEdges"><defs><clipPath id="ngc"><rect x="1278" y="173" width="690" height="894"/></clipPath></defs><g clip-path="url(#ngc)"><path d="M1285 983.6V850.2" stroke="#d8bfd8" stroke-width="2" stroke-dasharray="6 6" stroke-dashoffset="6"/><path d="M1293 1009.6V850.2" stroke="#d8bfd8" stroke-width="2" stroke-dasharray="6 6" stroke-dashoffset="6"/><path d="M1301 1025.3V850.2" stroke="#d8bfd8" stroke-width="2" stroke-dasharray="6 6" stroke-dashoffset="6"/><path d="M1309 1036.4V850.2" stroke="#d8bfd8" stroke-width="2" stroke-dasharray="6 6" stroke-dashoffset="6"/><path d="M1317 1036.6V850.2" stroke="#d8bfd8" stroke-width="2" stroke-dasharray="6 6" stroke-dashoffset="6"/><path d="M1325 1036.9V850.2" stroke="#d8bfd8" stroke-width="2" stroke-dasharray="6 6" stroke-dashoffset="6"/><path d="M1333 1037.1V850.2" stroke="#d8bfd8" stroke-width="2" stroke-dasharray="6 6" stroke-dashoffset="6"/><path d="M1341 1034.0V850.2" stroke="#d8bfd8" stroke-width="2" stroke-dasharray="6 6" stroke-dashoffset="6"/><path d="M1349 1030.8V850.2" stroke="#d8bfd8" stroke-width="2" stroke-dasharray="6 6" stroke-dashoffset="6"/><path d="M1357 1012.4V850.2" stroke="#d8bfd8" stroke-width="2" stroke-dasharray="6 6" stroke-dashoffset="6"/><path d="M1365 999.5V850.2" stroke="#d8bfd8" stroke-width="2" stroke-dasharray="6 6" stroke-dashoffset="6"/><path d="M1373 990.8V850.2" stroke="#d8bfd8" stroke-width="2" stroke-dasharray="6 6" stroke-dashoffset="6"/><path d="M1381 990.2V850.2" stroke="#d8bfd8" stroke-width="2" stroke-dasharray="6 6" stroke-dashoffset="6"/><path d="M1389 989.9V850.2" stroke="#d8bfd8" stroke-width="2" stroke-dasharray="6 6" stroke-dashoffset="6"/><path d="M1397 989.4V850.2" stroke="#d8bfd8" stroke-width="2" stroke-dasharray="6 6" stroke-dashoffset="6"/><path d="M1405 978.9V850.2" stroke="#d8bfd8" stroke-width="2" stroke-dasharray="6 6" stroke-dashoffset="6"/><path d="M1413 942.2V850.2" stroke="#d8bfd8" stroke-width="2" stroke-dasharray="6 6" stroke-dashoffset="6"/><path d="M1421 913.4V850.2" stroke="#d8bfd8" stroke-width="2" stroke-dasharray="6 6" stroke-dashoffset="6"/><path d="M1429 838.7V850.2" stroke="#f4a460" stroke-width="2" stroke-dasharray="6 6" stroke-dashoffset="6"/><path d="M1437 814.9V850.2" stroke="#f4a460" stroke-width="2" stroke-dasharray="6 6" stroke-dashoffset="6"/><path d="M1445 800.5V844.3" stroke="#f4a460" stroke-width="2" stroke-dasharray="6 6" stroke-dashoffset="6"/><path d="M1453 782.5V823.5" stroke="#f4a460" stroke-width="2" stroke-dasharray="6 6" stroke-dashoffset="6"/><path d="M1461 780.2V823.5" stroke="#f4a460" stroke-width="2" stroke-dasharray="6 6" stroke-dashoffset="6"/><path d="M1469 767.1V823.5" stroke="#f4a460" stroke-width="2" stroke-dasharray="6 6" stroke-dashoffset="6"/><path d="M1477 754.9V823.5" stroke="#f4a460" stroke-width="2" stroke-dasharray="6 6" stroke-dashoffset="6"/><path d="M1485 737.3V823.5" stroke="#f4a460" stroke-width="2" stroke-dasharray="6 6" stroke-dashoffset="6"/><path d="M1493 731.9V823.5" stroke="#f4a460" stroke-width="2" stroke-dasharray="6 6" stroke-dashoffset="6"/><path d="M1501 704.2V823.5" stroke="#f4a460" stroke-width="2" stroke-dasharray="6 6" stroke-dashoffset="6"/><path d="M1509 700.2V823.5" stroke="#f4a460" stroke-width="2" stroke-dasharray="6 6" stroke-dashoffset="6"/><path d="M1517 675.8V820.3" stroke="#f4a460" stroke-width="2" stroke-dasharray="6 6" stroke-dashoffset="6"/><path d="M1525 588.9V731.3" stroke="#f4a460" stroke-width="2" stroke-dasharray="6 6" stroke-dashoffset="6"/><path d="M1533 560.1V697.6" stroke="#f4a460" stroke-width="2" stroke-dasharray="6 6" stroke-dashoffset="6"/><path d="M1541 540.5V677.3" stroke="#f4a460" stroke-width="2" stroke-dasharray="6 6" stroke-dashoffset="6"/><path d="M1549 528.4V675.1" stroke="#f4a460" stroke-width="2" stroke-dasharray="6 6" stroke-dashoffset="6"/><path d="M1557 517.2V675.1" stroke="#f4a460" stroke-width="2" stroke-dasharray="6 6" stroke-dashoffset="6"/><path d="M1565 515.0V675.1" stroke="#f4a460" stroke-width="2" stroke-dasharray="6 6" stroke-dashoffset="6"/><path d="M1573 510.3V675.1" stroke="#f4a460" stroke-width="2" stroke-dasharray="6 6" stroke-dashoffset="6"/><path d="M1581 493.9V675.1" stroke="#f4a460" stroke-width="2" stroke-dasharray="6 6" stroke-dashoffset="6"/><path d="M1589 500.3V675.1" stroke="#f4a460" stroke-width="2" stroke-dasharray="6 6" stroke-dashoffset="6"/><path d="M1597 508.2V675.1" stroke="#f4a460" stroke-width="2" stroke-dasharray="6 6" stroke-dashoffset="6"/><path d="M1605 527.3V675.1" stroke="#f4a460" stroke-width="2" stroke-dasharray="6 6" stroke-dashoffset="6"/><path d="M1613 535.9V675.1" stroke="#f4a460" stroke-width="2" stroke-dasharray="6 6" stroke-dashoffset="6"/><path d="M1621 560.6V675.1" stroke="#f4a460" stroke-width="2" stroke-dasharray="6 6" stroke-dashoffset="6"/><path d="M1629 631.7V675.1" stroke="#f4a460" stroke-width="2" stroke-dasharray="6 6" stroke-dashoffset="6"/><path d="M1637 632.2V675.1" stroke="#f4a460" stroke-width="2" stroke-dasharray="6 6" stroke-dashoffset="6"/><path d="M1645 632.8V675.1" stroke="#f4a460" stroke-width="2" stroke-dasharray="6 6" stroke-dashoffset="6"/><path d="M1653 633.3V675.1" stroke="#f4a460" stroke-width="2" stroke-dasharray="6 6" stroke-dashoffset="6"/><path d="M1661 654.8V675.1" stroke="#f4a460" stroke-width="2" stroke-dasharray="6 6" stroke-dashoffset="6"/><path d="M1677 696.5V675.1" stroke="#d8bfd8" stroke-width="2" stroke-dasharray="6 6" stroke-dashoffset="6"/><path d="M1685 725.3V675.1" stroke="#d8bfd8" stroke-width="2" stroke-dasharray="6 6" stroke-dashoffset="6"/><path d="M1693 747.2V668.4" stroke="#d8bfd8" stroke-width="2" stroke-dasharray="6 6" stroke-dashoffset="6"/><path d="M1701 750.6V668.4" stroke="#d8bfd8" stroke-width="2" stroke-dasharray="6 6" stroke-dashoffset="6"/><path d="M1709 756.4V668.4" stroke="#d8bfd8" stroke-width="2" stroke-dasharray="6 6" stroke-dashoffset="6"/><path d="M1717 763.4V653.6" stroke="#d8bfd8" stroke-width="2" stroke-dasharray="6 6" stroke-dashoffset="6"/><path d="M1725 777.7V648.6" stroke="#d8bfd8" stroke-width="2" stroke-dasharray="6 6" stroke-dashoffset="6"/><path d="M1733 786.0V648.4" stroke="#d8bfd8" stroke-width="2" stroke-dasharray="6 6" stroke-dashoffset="6"/><path d="M1741 796.7V648.4" stroke="#d8bfd8" stroke-width="2" stroke-dasharray="6 6" stroke-dashoffset="6"/><path d="M1749 823.9V648.4" stroke="#d8bfd8" stroke-width="2" stroke-dasharray="6 6" stroke-dashoffset="6"/><path d="M1757 863.0V627.2" stroke="#d8bfd8" stroke-width="2" stroke-dasharray="6 6" stroke-dashoffset="6"/><path d="M1765 882.9V625.7" stroke="#d8bfd8" stroke-width="2" stroke-dasharray="6 6" stroke-dashoffset="6"/><path d="M1773 871.7V625.7" stroke="#d8bfd8" stroke-width="2" stroke-dasharray="6 6" stroke-dashoffset="6"/><path d="M1781 870.9V625.7" stroke="#d8bfd8" stroke-width="2" stroke-dasharray="6 6" stroke-dashoffset="6"/><path d="M1789 871.9V625.7" stroke="#d8bfd8" stroke-width="2" stroke-dasharray="6 6" stroke-dashoffset="6"/><path d="M1797 879.4V625.7" stroke="#d8bfd8" stroke-width="2" stroke-dasharray="6 6" stroke-dashoffset="6"/><path d="M1805 884.8V625.7" stroke="#d8bfd8" stroke-width="2" stroke-dasharray="6 6" stroke-dashoffset="6"/><path d="M1813 907.8V625.7" stroke="#d8bfd8" stroke-width="2" stroke-dasharray="6 6" stroke-dashoffset="6"/><path d="M1821 910.5V625.7" stroke="#d8bfd8" stroke-width="2" stroke-dasharray="6 6" stroke-dashoffset="6"/><path d="M1829 913.0V625.7" stroke="#d8bfd8" stroke-width="2" stroke-dasharray="6 6" stroke-dashoffset="6"/><path d="M1837 868.2V625.7" stroke="#d8bfd8" stroke-width="2" stroke-dasharray="6 6" stroke-dashoffset="6"/><path d="M1845 845.4V625.7" stroke="#d8bfd8" stroke-width="2" stroke-dasharray="6 6" stroke-dashoffset="6"/><path d="M1853 834.8V625.7" stroke="#d8bfd8" stroke-width="2" stroke-dasharray="6 6" stroke-dashoffset="6"/><path d="M1861 808.4V625.7" stroke="#d8bfd8" stroke-width="2" stroke-dasharray="6 6" stroke-dashoffset="6"/><path d="M1869 793.5V625.7" stroke="#d8bfd8" stroke-width="2" stroke-dasharray="6 6" stroke-dashoffset="6"/><path d="M1877 793.5V625.7" stroke="#d8bfd8" stroke-width="2" stroke-dasharray="6 6" stroke-dashoffset="6"/><path d="M1885 793.5V625.7" stroke="#d8bfd8" stroke-width="2" stroke-dasharray="6 6" stroke-dashoffset="6"/><path d="M1893 793.5V625.7" stroke="#d8bfd8" stroke-width="2" stroke-dasharray="6 6" stroke-dashoffset="6"/><path d="M1901 778.6V625.7" stroke="#d8bfd8" stroke-width="2" stroke-dasharray="6 6" stroke-dashoffset="6"/><path d="M1909 778.8V625.7" stroke="#d8bfd8" stroke-width="2" stroke-dasharray="6 6" stroke-dashoffset="6"/><path d="M1917 779.1V625.7" stroke="#d8bfd8" stroke-width="2" stroke-dasharray="6 6" stroke-dashoffset="6"/><path d="M1925 779.3V625.7" stroke="#d8bfd8" stroke-width="2" stroke-dasharray="6 6" stroke-dashoffset="6"/><path d="M1933 779.1V625.7" stroke="#d8bfd8" stroke-width="2" stroke-dasharray="6 6" stroke-dashoffset="6"/><path d="M1941 777.8V625.7" stroke="#d8bfd8" stroke-width="2" stroke-dasharray="6 6" stroke-dashoffset="6"/><path d="M1949 776.4V625.7" stroke="#d8bfd8" stroke-width="2" stroke-dasharray="6 6" stroke-dashoffset="6"/><path d="M1957 776.2V697.6" stroke="#d8bfd8" stroke-width="2" stroke-dasharray="6 6" stroke-dashoffset="6"/><path d="M1965 776.2V709.3" stroke="#d8bfd8" stroke-width="2" stroke-dasharray="6 6" stroke-dashoffset="6"/><path d="M1278 526H1968" stroke="#c0c0c0" stroke-width="2"/><path d="M1405 173V1067" stroke="#000" stroke-width="2" stroke-dasharray="6 6" stroke-dashoffset="2"/><path d="M1565 173V1067" stroke="#000" stroke-width="2" stroke-dasharray="6 6" stroke-dashoffset="2"/><path d="M1725 173V1067" stroke="#000" stroke-width="2" stroke-dasharray="6 6" stroke-dashoffset="2"/><path d="M1949 173V1067" stroke="#000" stroke-width="2" stroke-dasharray="6 6" stroke-dashoffset="2"/><path d="M1285 983.6L1293 1009.6M1293 1009.6L1301 1025.3M1301 1025.3L1309 1036.4M1309 1036.4L1317 1036.6M1317 1036.6L1325 1036.9M1325 1036.9L1333 1037.1M1333 1037.1L1341 1034.0M1341 1034.0L1349 1030.8M1349 1030.8L1357 1012.4M1357 1012.4L1365 999.5M1365 999.5L1373 990.8M1373 990.8L1381 990.2M1381 990.2L1389 989.9M1389 989.9L1397 989.4M1397 989.4L1405 978.9M1405 978.9L1413 942.2M1413 942.2L1421 913.4M1421 913.4L1429 838.7M1429 838.7L1437 814.9M1437 814.9L1445 800.5M1445 800.5L1453 782.5M1453 782.5L1461 780.2M1461 780.2L1469 767.1M1469 767.1L1477 754.9M1477 754.9L1485 737.3M1485 737.3L1493 731.9M1493 731.9L1501 704.2M1501 704.2L1509 700.2M1509 700.2L1517 675.8M1517 675.8L1525 588.9M1525 588.9L1533 560.1M1533 560.1L1541 540.5M1541 540.5L1549 528.4M1549 528.4L1557 517.2M1557 517.2L1565 515.0M1565 515.0L1573 510.3M1573 510.3L1581 493.9M1581 493.9L1589 500.3M1589 500.3L1597 508.2M1597 508.2L1605 527.3M1605 527.3L1613 535.9M1613 535.9L1621 560.6M1621 560.6L1629 631.7M1629 631.7L1637 632.2M1637 632.2L1645 632.8M1645 632.8L1653 633.3M1653 633.3L1661 654.8M1661 654.8L1669 673.5M1669 673.5L1677 696.5M1677 696.5L1685 725.3M1685 725.3L1693 747.2M1693 747.2L1701 750.6M1701 750.6L1709 756.4M1709 756.4L1717 763.4M1717 763.4L1725 777.7M1725 777.7L1733 786.0M1733 786.0L1741 796.7M1741 796.7L1749 823.9M1749 823.9L1757 863.0M1757 863.0L1765 882.9M1765 882.9L1773 871.7M1773 871.7L1781 870.9M1781 870.9L1789 871.9M1789 871.9L1797 879.4M1797 879.4L1805 884.8M1805 884.8L1813 907.8M1813 907.8L1821 910.5M1821 910.5L1829 913.0M1829 913.0L1837 868.2M1837 868.2L1845 845.4M1845 845.4L1853 834.8M1853 834.8L1861 808.4M1861 808.4L1869 793.5M1869 793.5L1877 793.5M1877 793.5L1885 793.5M1885 793.5L1893 793.5M1893 793.5L1901 778.6M1901 778.6L1909 778.8M1909 778.8L1917 779.1M1917 779.1L1925 779.3M1925 779.3L1933 779.1M1933 779.1L1941 777.8M1941 777.8L1949 776.4M1949 776.4L1957 776.2M1957 776.2L1965 776.2" fill="none" stroke="#f4a460" stroke-width="2" stroke-dasharray="6 6"/><path d="M1285 850.2L1293 850.2M1293 850.2L1301 850.2M1301 850.2L1309 850.2M1309 850.2L1317 850.2M1317 850.2L1325 850.2M1325 850.2L1333 850.2M1333 850.2L1341 850.2M1341 850.2L1349 850.2M1349 850.2L1357 850.2M1357 850.2L1365 850.2M1365 850.2L1373 850.2M1373 850.2L1381 850.2M1381 850.2L1389 850.2M1389 850.2L1397 850.2M1397 850.2L1405 850.2M1405 850.2L1413 850.2M1413 850.2L1421 850.2M1421 850.2L1429 850.2M1429 850.2L1437 850.2M1437 850.2L1445 844.3M1445 844.3L1453 823.5M1453 823.5L1461 823.5M1461 823.5L1469 823.5M1469 823.5L1477 823.5M1477 823.5L1485 823.5M1485 823.5L1493 823.5M1493 823.5L1501 823.5M1501 823.5L1509 823.5M1509 823.5L1517 820.3M1517 820.3L1525 731.3M1525 731.3L1533 697.6M1533 697.6L1541 677.3M1541 677.3L1549 675.1M1549 675.1L1557 675.1M1557 675.1L1565 675.1M1565 675.1L1573 675.1M1573 675.1L1581 675.1M1581 675.1L1589 675.1M1589 675.1L1597 675.1M1597 675.1L1605 675.1M1605 675.1L1613 675.1M1613 675.1L1621 675.1M1621 675.1L1629 675.1M1629 675.1L1637 675.1M1637 675.1L1645 675.1M1645 675.1L1653 675.1M1653 675.1L1661 675.1M1661 675.1L1669 675.1M1669 675.1L1677 675.1M1677 675.1L1685 675.1M1685 675.1L1693 668.4M1693 668.4L1701 668.4M1701 668.4L1709 668.4M1709 668.4L1717 653.6M1717 653.6L1725 648.6M1725 648.6L1733 648.4M1733 648.4L1741 648.4M1741 648.4L1749 648.4M1749 648.4L1757 627.2M1757 627.2L1765 625.7M1765 625.7L1773 625.7M1773 625.7L1781 625.7M1781 625.7L1789 625.7M1789 625.7L1797 625.7M1797 625.7L1805 625.7M1805 625.7L1813 625.7M1813 625.7L1821 625.7M1821 625.7L1829 625.7M1829 625.7L1837 625.7M1837 625.7L1845 625.7M1845 625.7L1853 625.7M1853 625.7L1861 625.7M1861 625.7L1869 625.7M1869 625.7L1877 625.7M1877 625.7L1885 625.7M1885 625.7L1893 625.7M1893 625.7L1901 625.7M1901 625.7L1909 625.7M1909 625.7L1917 625.7M1917 625.7L1925 625.7M1925 625.7L1933 625.7M1933 625.7L1941 625.7M1941 625.7L1949 625.7M1949 625.7L1957 697.6M1957 697.6L1965 709.3" fill="none" stroke="#d8bfd8" stroke-width="2" stroke-dasharray="6 6"/><path d="M1949 627V776" stroke="#fffff0" stroke-width="2"/><path d="M1949 627V776" stroke="#d8bfd8" stroke-width="2" stroke-dasharray="6 6" stroke-dashoffset="0"/><path d="M1277 542V578" stroke="#000" stroke-width="2"/><rect x="1274" y="543" width="6" height="33" fill="#000"/><path d="M1285 548V674" stroke="#000" stroke-width="2"/><rect x="1282" y="575" width="6" height="83" fill="#000"/><path d="M1293 548V662" stroke="#000" stroke-width="2"/><rect x="1291" y="623" width="4" height="36" fill="#fff" stroke="#000" stroke-width="2"/><path d="M1301 538V653" stroke="#000" stroke-width="2"/><rect x="1299" y="548" width="4" height="73" fill="#fff" stroke="#000" stroke-width="2"/><path d="M1309 497V540" stroke="#000" stroke-width="2"/><rect x="1306" y="507" width="6" height="8" fill="#000"/><path d="M1317 296V518" stroke="#000" stroke-width="2"/><rect x="1315" y="324" width="4" height="192" fill="#fff" stroke="#000" stroke-width="2"/><path d="M1325 235V366" stroke="#000" stroke-width="2"/><rect x="1323" y="252" width="4" height="71" fill="#fff" stroke="#000" stroke-width="2"/><path d="M1333 205V290" stroke="#000" stroke-width="2"/><rect x="1330" y="249" width="6" height="28" fill="#000"/><path d="M1341 341V390" stroke="#000" stroke-width="2"/><rect x="1338" y="365" width="6" height="25" fill="#000"/><path d="M1349 369V531" stroke="#000" stroke-width="2"/><rect x="1346" y="389" width="6" height="129" fill="#000"/><path d="M1357 473V577" stroke="#000" stroke-width="2"/><rect x="1354" y="517" width="6" height="6" fill="#000"/><path d="M1365 493V575" stroke="#000" stroke-width="2"/><rect x="1362" y="520" width="6" height="2" fill="#000"/><path d="M1373 470V553" stroke="#000" stroke-width="2"/><rect x="1371" y="482" width="4" height="64" fill="#fff" stroke="#000" stroke-width="2"/><path d="M1381 469V630" stroke="#000" stroke-width="2"/><rect x="1378" y="481" width="6" height="122" fill="#000"/><path d="M1389 533V656" stroke="#000" stroke-width="2"/><rect x="1386" y="598" width="6" height="48" fill="#000"/><path d="M1397 633V744" stroke="#000" stroke-width="2"/><rect x="1394" y="647" width="6" height="79" fill="#000"/><path d="M1405 755V850" stroke="#000" stroke-width="2"/><rect x="1403" y="781" width="4" height="10" fill="#fff" stroke="#000" stroke-width="2"/><path d="M1413 753V827" stroke="#000" stroke-width="2"/><rect x="1410" y="782" width="6" height="32" fill="#000"/><path d="M1421 804V930" stroke="#000" stroke-width="2"/><rect x="1418" y="809" width="6" height="113" fill="#000"/><path d="M1429 847V920" stroke="#000" stroke-width="2"/><rect x="1427" y="851" width="4" height="68" fill="#fff" stroke="#000" stroke-width="2"/><path d="M1437 820V880" stroke="#000" stroke-width="2"/><rect x="1434" y="834" width="6" height="47" fill="#000"/><path d="M1445 798V903" stroke="#000" stroke-width="2"/><rect x="1443" y="833" width="4" height="45" fill="#fff" stroke="#000" stroke-width="2"/><path d="M1453 810V863" stroke="#000" stroke-width="2"/><rect x="1450" y="831" width="6" height="13" fill="#000"/><path d="M1461 839V893" stroke="#000" stroke-width="2"/><rect x="1458" y="844" width="6" height="43" fill="#000"/><path d="M1469 884V924" stroke="#000" stroke-width="2"/><rect x="1466" y="885" width="6" height="25" fill="#000"/><path d="M1477 898V970" stroke="#000" stroke-width="2"/><rect x="1474" y="910" width="6" height="57" fill="#000"/><path d="M1485 958V997" stroke="#000" stroke-width="2"/><rect x="1482" y="965" width="6" height="23" fill="#000"/><path d="M1493 971V1000" stroke="#000" stroke-width="2"/><rect x="1491" y="979" width="4" height="6" fill="#fff" stroke="#000" stroke-width="2"/><path d="M1501 969V1013" stroke="#000" stroke-width="2"/><rect x="1498" y="969" width="6" height="21" fill="#000"/><path d="M1509 978V1035" stroke="#000" stroke-width="2"/><rect x="1506" y="991" width="6" height="31" fill="#000"/><path d="M1517 998V1050" stroke="#000" stroke-width="2"/><rect x="1515" y="1003" width="4" height="18" fill="#fff" stroke="#000" stroke-width="2"/><path d="M1525 991V1023" stroke="#000" stroke-width="2"/><rect x="1522" y="1002" width="6" height="21" fill="#000"/><path d="M1533 964V1015" stroke="#000" stroke-width="2"/><rect x="1530" y="984" width="6" height="7" fill="#000"/><path d="M1541 968V1049" stroke="#000" stroke-width="2"/><rect x="1538" y="991" width="6" height="52" fill="#000"/><path d="M1549 1019V1054" stroke="#000" stroke-width="2"/><rect x="1547" y="1037" width="4" height="2" fill="#fff" stroke="#000" stroke-width="2"/><path d="M1557 971V1050" stroke="#000" stroke-width="2"/><rect x="1555" y="995" width="4" height="40" fill="#fff" stroke="#000" stroke-width="2"/><path d="M1565 905V945" stroke="#000" stroke-width="2"/><rect x="1563" y="911" width="4" height="29" fill="#fff" stroke="#000" stroke-width="2"/><path d="M1573 910V970" stroke="#000" stroke-width="2"/><rect x="1570" y="911" width="6" height="35" fill="#000"/><path d="M1581 900V957" stroke="#000" stroke-width="2"/><rect x="1579" y="915" width="4" height="28" fill="#fff" stroke="#000" stroke-width="2"/><path d="M1589 875V935" stroke="#000" stroke-width="2"/><rect x="1587" y="901" width="4" height="11" fill="#fff" stroke="#000" stroke-width="2"/><path d="M1597 775V823" stroke="#000" stroke-width="2"/><rect x="1595" y="781" width="4" height="36" fill="#fff" stroke="#000" stroke-width="2"/><path d="M1605 777V833" stroke="#000" stroke-width="2"/><rect x="1602" y="782" width="6" height="25" fill="#000"/><path d="M1613 800V879" stroke="#000" stroke-width="2"/><rect x="1610" y="806" width="6" height="50" fill="#000"/><path d="M1621 789V887" stroke="#000" stroke-width="2"/><rect x="1619" y="793" width="4" height="60" fill="#fff" stroke="#000" stroke-width="2"/><path d="M1629 729V768" stroke="#000" stroke-width="2"/><rect x="1627" y="737" width="4" height="28" fill="#fff" stroke="#000" stroke-width="2"/><path d="M1637 677V737" stroke="#000" stroke-width="2"/><rect x="1635" y="728" width="4" height="7" fill="#fff" stroke="#000" stroke-width="2"/><path d="M1645 663V755" stroke="#000" stroke-width="2"/><rect x="1643" y="697" width="4" height="25" fill="#fff" stroke="#000" stroke-width="2"/><path d="M1653 614V703" stroke="#000" stroke-width="2"/><rect x="1651" y="674" width="4" height="19" fill="#fff" stroke="#000" stroke-width="2"/><path d="M1661 632V673" stroke="#000" stroke-width="2"/><rect x="1658" y="654" width="6" height="16" fill="#000"/><path d="M1669 633V728" stroke="#000" stroke-width="2"/><rect x="1667" y="654" width="4" height="15" fill="#fff" stroke="#000" stroke-width="2"/><path d="M1677 645V760" stroke="#000" stroke-width="2"/><rect x="1674" y="655" width="6" height="100" fill="#000"/><path d="M1685 713V787" stroke="#000" stroke-width="2"/><rect x="1683" y="733" width="4" height="20" fill="#fff" stroke="#000" stroke-width="2"/><path d="M1693 779V817" stroke="#000" stroke-width="2"/><rect x="1691" y="803" width="4" height="12" fill="#fff" stroke="#000" stroke-width="2"/><path d="M1701 700V811" stroke="#000" stroke-width="2"/><rect x="1699" y="703" width="4" height="98" fill="#fff" stroke="#000" stroke-width="2"/><path d="M1709 698V772" stroke="#000" stroke-width="2"/><rect x="1706" y="702" width="6" height="66" fill="#000"/><path d="M1717 760V813" stroke="#000" stroke-width="2"/><rect x="1714" y="768" width="6" height="36" fill="#000"/><path d="M1725 688V720" stroke="#000" stroke-width="2"/><rect x="1723" y="697" width="4" height="20" fill="#fff" stroke="#000" stroke-width="2"/><path d="M1733 627V717" stroke="#000" stroke-width="2"/><rect x="1731" y="633" width="4" height="62" fill="#fff" stroke="#000" stroke-width="2"/><path d="M1741 613V670" stroke="#000" stroke-width="2"/><rect x="1738" y="629" width="6" height="29" fill="#000"/><path d="M1749 645V663" stroke="#000" stroke-width="2"/><rect x="1746" y="657" width="6" height="5" fill="#000"/><path d="M1757 705V768" stroke="#000" stroke-width="2"/><rect x="1754" y="728" width="6" height="29" fill="#000"/><path d="M1765 695V768" stroke="#000" stroke-width="2"/><rect x="1763" y="746" width="4" height="10" fill="#fff" stroke="#000" stroke-width="2"/><path d="M1773 693V757" stroke="#000" stroke-width="2"/><rect x="1771" y="724" width="4" height="20" fill="#fff" stroke="#000" stroke-width="2"/><path d="M1781 720V783" stroke="#000" stroke-width="2"/><rect x="1778" y="722" width="6" height="38" fill="#000"/><path d="M1789 743V770" stroke="#000" stroke-width="2"/><rect x="1786" y="756" width="6" height="2" fill="#000"/><path d="M1797 700V767" stroke="#000" stroke-width="2"/><rect x="1795" y="712" width="4" height="50" fill="#fff" stroke="#000" stroke-width="2"/><path d="M1805 643V718" stroke="#000" stroke-width="2"/><rect x="1803" y="709" width="4" height="3" fill="#fff" stroke="#000" stroke-width="2"/><path d="M1813 682V720" stroke="#000" stroke-width="2"/><rect x="1811" y="696" width="4" height="16" fill="#fff" stroke="#000" stroke-width="2"/><path d="M1821 529V578" stroke="#000" stroke-width="2"/><rect x="1819" y="540" width="4" height="5" fill="#fff" stroke="#000" stroke-width="2"/><path d="M1829 517V618" stroke="#000" stroke-width="2"/><rect x="1827" y="527" width="4" height="14" fill="#fff" stroke="#000" stroke-width="2"/><polyline points="1277.3,987.0 1285.0,978.7 1293.4,993.7 1301.0,1020.4 1309.0,1002.0 1316.7,1020.4 1325.1,990.4 1333.4,1041.1 1341.1,1037.1 1349.1,987.0 1357.1,910.3 1365.1,945.3 1373.4,913.6 1381.1,901.9 1385.1,826.9 1389.1,780.2 1397.1,806.9 1405.1,853.6 1410.1,826.9 1416.8,753.5 1421.2,735.1 1430.2,723.4 1436.8,693.4 1445.2,673.4 1453.5,668.4 1461.2,654.4 1469.2,755.1 1476.9,733.4 1485.2,800.2 1493.2,701.7 1501.2,753.5 1509.2,802.8 1517.2,691.7 1525.3,631.7 1533.3,656.7 1541.3,660.0 1549.3,757.5 1557.3,746.8 1565.3,725.1 1573.3,760.1 1581.3,760.1 1587.0,713.4 1597.0,708.4 1604.7,696.7 1607.0,653.4 1608.7,620.0 1610.3,600.0 1611.0,559.9 1613.7,538.3 1619.3,527.2" fill="none" stroke="#00ff00" stroke-width="2" /><polyline points="1277.3,816.2 1293.4,816.2 1301.7,801.8 1309.0,798.5 1311.7,760.1 1315.0,713.4 1318.4,691.7 1330.1,646.7 1342.7,620.0 1349.1,601.6 1373.4,601.6 1380.1,590.0 1389.1,588.3 1396.8,583.3 1401.8,553.3 1405.1,533.2 1412.8,511.6 1416.8,536.6 1421.2,563.3 1469.2,563.3 1483.5,596.6 1496.9,598.3 1503.6,606.7 1513.6,620.0 1515.2,623.3 1533.6,623.3 1536.9,653.4 1541.9,696.7 1550.3,720.1 1557.0,761.8 1581.0,761.8 1587.0,790.2 1597.0,836.9 1603.7,886.9 1605.3,903.6 1613.7,904.3 1620.4,915.3 1628.7,893.6 1637.0,865.2 1645.4,858.6 1652.0,836.2 1750.5,836.2 1757.2,833.5 1763.8,794.2 1772.2,793.5 1787.2,775.2 1797.2,752.5 1813.2,752.5 1820.6,703.4 1828.9,670.1" fill="none" stroke="#0000ff" stroke-width="2" /><polyline points="1277.3,653.4 1285.0,651.7 1288.4,620.0 1293.4,593.3 1301.7,593.3 1309.0,585.0 1312.4,546.6 1320.1,466.5 1325.1,453.2 1332.7,435.5 1349.1,435.5 1353.4,431.5 1365.1,424.8 1369.1,403.1 1373.1,387.4 1380.1,414.8 1389.1,426.5 1396.8,464.8 1400.1,503.2 1403.5,553.3 1408.5,580.0 1415.1,620.0 1416.8,653.4 1420.8,700.1 1445.2,700.1 1448.5,713.4 1453.5,730.1 1461.9,786.8 1466.9,826.9 1470.2,846.9 1476.9,860.2 1483.5,893.6 1486.9,897.6 1498.6,902.9 1515.2,925.3 1525.3,945.3 1533.6,967.0 1541.9,977.0 1548.6,1007.1 1557.0,1008.7 1563.6,982.7 1572.0,982.0 1582.0,977.0 1588.7,967.0 1592.0,948.7 1597.0,916.0 1618.7,915.3 1623.7,886.9 1628.7,850.2 1633.7,831.9 1647.0,801.8 1653.7,770.2 1660.4,752.5 1685.4,752.5 1692.1,717.8 1717.1,717.8 1725.5,725.8 1733.8,723.4 1740.5,716.1 1757.2,716.1 1763.8,714.1 1780.5,714.1 1787.2,700.1 1805.5,700.1 1812.2,710.8 1817.2,676.7 1822.2,655.0 1827.2,653.4" fill="none" stroke="#ff0000" stroke-width="2" /><path d="M1818 173h20l-10 10z" fill="#c0c0c0"/><path d="M1278 1067v-8l8 8z" fill="#c0c0c0"/></g><rect x="1277" y="172" width="692" height="896" fill="none" stroke="#000" stroke-width="2"/><path d="M1970 232h6" stroke="#000" stroke-width="2"/><path d="M1970 296h6" stroke="#000" stroke-width="2"/><path d="M1970 360h6" stroke="#000" stroke-width="2"/><path d="M1970 424h6" stroke="#000" stroke-width="2"/><path d="M1970 488h6" stroke="#000" stroke-width="2"/><path d="M1970 554h6" stroke="#000" stroke-width="2"/><path d="M1970 618h6" stroke="#000" stroke-width="2"/><path d="M1970 682h6" stroke="#000" stroke-width="2"/><path d="M1970 746h6" stroke="#000" stroke-width="2"/><path d="M1970 810h6" stroke="#000" stroke-width="2"/><path d="M1970 874h6" stroke="#000" stroke-width="2"/><path d="M1970 938h6" stroke="#000" stroke-width="2"/><path d="M1970 1004h6" stroke="#000" stroke-width="2"/><path d="M1277 1068v8" stroke="#000" stroke-width="2"/><path d="M1405 1068v8" stroke="#000" stroke-width="2"/><path d="M1533 1068v8" stroke="#000" stroke-width="2"/><path d="M1661 1068v8" stroke="#000" stroke-width="2"/><path d="M1789 1068v8" stroke="#000" stroke-width="2"/></svg><svg style="left:1286px;top:183px" width="74" height="22" viewBox="0 0 74 22" shape-rendering="crispEdges" fill="none" stroke-width="2"><rect x="1" y="1" width="28" height="20" fill="#fff" stroke="none"/><rect x="4" y="6" width="10" height="10" fill="#ffe0d8" stroke="none"/><rect x="16" y="6" width="10" height="10" fill="#c0e4fc" stroke="none"/><path d="M14 1H1V21H14M4 5H14M4 11H14M4 17H14" stroke="#dc2a1e"/><path d="M14 1H29V21H14M16 5H26M16 11H26M16 17H26" stroke="#1060a8"/><path d="M43 1H49V9H55V21H43Z" fill="#ffe0d8" stroke="#dc2a1e"/><path d="M65 1H71V21H59V9H65Z" fill="#c0e4fc" stroke="#1060a8"/><rect x="53" y="1" width="8" height="4" fill="#fff" stroke="#a0a0a0"/></svg><span class="t c" style="top:183.8px;left:1368.3px;color:#000;letter-spacing:-0.07px;white-space:pre;">NGAS, H4:  Natural Gas</span><span class="t c" style="top:222.1px;left:1978.3px;color:#000;letter-spacing:-1.10px;">5.498</span><span class="t c" style="top:286.1px;left:1978.3px;color:#000;letter-spacing:-1.10px;">5.371</span><span class="t c" style="top:350.1px;left:1978.3px;color:#000;letter-spacing:-1.10px;">5.244</span><span class="t c" style="top:414.1px;left:1978.3px;color:#000;letter-spacing:-1.10px;">5.117</span><span class="t c" style="top:478.1px;left:1978.3px;color:#000;letter-spacing:-1.10px;">4.990</span><span class="t c" style="top:544.1px;left:1978.3px;color:#000;letter-spacing:-1.10px;">4.863</span><span class="t c" style="top:608.1px;left:1978.3px;color:#000;letter-spacing:-1.10px;">4.736</span><span class="t c" style="top:672.1px;left:1978.3px;color:#000;letter-spacing:-1.10px;">4.609</span><span class="t c" style="top:736.1px;left:1978.3px;color:#000;letter-spacing:-1.10px;">4.482</span><span class="t c" style="top:800.1px;left:1978.3px;color:#000;letter-spacing:-1.10px;">4.355</span><span class="t c" style="top:864.1px;left:1978.3px;color:#000;letter-spacing:-1.10px;">4.228</span><span class="t c" style="top:928.1px;left:1978.3px;color:#000;letter-spacing:-1.10px;">4.101</span><span class="t c" style="top:994.1px;left:1978.3px;color:#000;letter-spacing:-1.10px;">3.974</span><div style="left:1974px;top:515px;width:58px;height:22px;background:#c0c0c0;"></div><span class="t c" style="top:515.8px;left:1978.3px;color:#fff;letter-spacing:-1.10px;">4.915</span><span class="t c" style="top:1075.6px;left:1275.8px;color:#000;letter-spacing:-0.64px;">1 Feb 2022</span><span class="t c" style="top:1075.6px;left:1400.8px;color:#000;letter-spacing:-0.41px;">7 Feb 08:00</span><span class="t c" style="top:1075.6px;left:1531.3999999999999px;color:#000;letter-spacing:-0.49px;">11 Feb 08:00</span><span class="t c" style="top:1075.6px;left:1659.5px;color:#000;letter-spacing:-0.49px;">17 Feb 08:00</span><span class="t c" style="top:1075.6px;left:1786.2px;color:#000;letter-spacing:-0.49px;">23 Feb 08:00</span>
<div style="left:2068px;top:119px;width:802px;height:1000px;background:#e4e4e4;"></div><svg style="left:2082px;top:124px" width="24" height="30" viewBox="0 0 24 30" shape-rendering="crispEdges"><path d="M5 5v20M17 1v28" stroke="#0da20d" stroke-width="2"/><rect x="1" y="10" width="8" height="10" fill="#d8fbd8" stroke="#0da20d" stroke-width="2"/><rect x="13" y="8" width="8" height="14" fill="#d8fbd8" stroke="#0da20d" stroke-width="2"/></svg><span class="t" style="top:130.1px;left:2110.5px;color:#808080;font-weight:bold;letter-spacing:0.18px;">AUDUSD,Weekly</span><svg style="left:2712px;top:133px" width="140" height="24" viewBox="0 0 140 24" fill="none" stroke="#b0b0b0" stroke-width="2.4"><path d="M0 19h18"/><rect x="57.2" y="3.200" width="15.600" height="15.600"/><path d="M112 2l18 18M130 2l-18 18" stroke-width="2.2"/></svg><div style="left:2074px;top:163px;width:790px;height:950px;background:#fff;box-shadow:inset -2px -2px 0 #fff, inset 2px 2px 0 #808080, inset -4px -4px 0 #e4e4e4, inset 4px 4px 0 #404040;"></div><svg style="left:2078px;top:167px;overflow:hidden" width="782" height="942" viewBox="2078 167 782 942" shape-rendering="crispEdges"><defs><clipPath id="auc"><rect x="2084" y="173" width="670" height="714"/></clipPath><clipPath id="aum"><rect x="2084" y="893" width="670" height="174"/></clipPath></defs><g clip-path="url(#auc)"><rect x="2236" y="423" width="520" height="21" fill="#ffa500"/><rect x="2283" y="487" width="480" height="30" fill="#ffa500"/><rect x="2084" y="799" width="680" height="30" fill="#ffa500"/><path d="M2491 173V887" stroke="#000" stroke-width="2" stroke-dasharray="6 6" stroke-dashoffset="2"/><path d="M2083 420V446" stroke="#000" stroke-width="2"/><rect x="2080" y="423" width="6" height="18" fill="#000"/><path d="M2091 411V460" stroke="#000" stroke-width="2"/><rect x="2088" y="438" width="6" height="3" fill="#000"/><path d="M2099 419V488" stroke="#000" stroke-width="2"/><rect x="2096" y="439" width="6" height="31" fill="#000"/><path d="M2107 455V500" stroke="#000" stroke-width="2"/><rect x="2105" y="457" width="4" height="20" fill="#fff" stroke="#000" stroke-width="2"/><path d="M2115 415V464" stroke="#000" stroke-width="2"/><rect x="2113" y="422" width="4" height="36" fill="#fff" stroke="#000" stroke-width="2"/><path d="M2123 371V434" stroke="#000" stroke-width="2"/><rect x="2121" y="376" width="4" height="42" fill="#fff" stroke="#000" stroke-width="2"/><path d="M2131 316V448" stroke="#000" stroke-width="2"/><rect x="2128" y="375" width="6" height="72" fill="#000"/><path d="M2139 387V476" stroke="#000" stroke-width="2"/><rect x="2136" y="441" width="6" height="6" fill="#000"/><path d="M2147 403V476" stroke="#000" stroke-width="2"/><rect x="2145" y="420" width="4" height="26" fill="#fff" stroke="#000" stroke-width="2"/><path d="M2155 383V444" stroke="#000" stroke-width="2"/><rect x="2152" y="421" width="6" height="8" fill="#000"/><path d="M2163 421V500" stroke="#000" stroke-width="2"/><rect x="2160" y="437" width="6" height="37" fill="#000"/><path d="M2171 459V514" stroke="#000" stroke-width="2"/><rect x="2168" y="472" width="6" height="18" fill="#000"/><path d="M2179 456V490" stroke="#000" stroke-width="2"/><rect x="2177" y="477" width="4" height="8" fill="#fff" stroke="#000" stroke-width="2"/><path d="M2187 419V492" stroke="#000" stroke-width="2"/><rect x="2185" y="432" width="4" height="44" fill="#fff" stroke="#000" stroke-width="2"/><path d="M2195 397V448" stroke="#000" stroke-width="2"/><rect x="2193" y="422" width="4" height="10" fill="#fff" stroke="#000" stroke-width="2"/><path d="M2203 395V446" stroke="#000" stroke-width="2"/><rect x="2200" y="429" width="6" height="15" fill="#000"/><path d="M2211 376V454" stroke="#000" stroke-width="2"/><rect x="2209" y="384" width="4" height="51" fill="#fff" stroke="#000" stroke-width="2"/><path d="M2219 365V448" stroke="#000" stroke-width="2"/><rect x="2216" y="380" width="6" height="31" fill="#000"/><path d="M2227 397V440" stroke="#000" stroke-width="2"/><rect x="2224" y="415" width="6" height="16" fill="#000"/><path d="M2235 406V454" stroke="#000" stroke-width="2"/><rect x="2232" y="433" width="6" height="8" fill="#000"/><path d="M2243 415V466" stroke="#000" stroke-width="2"/><rect x="2241" y="428" width="4" height="10" fill="#fff" stroke="#000" stroke-width="2"/><path d="M2251 414V447" stroke="#000" stroke-width="2"/><rect x="2248" y="431" width="6" height="12" fill="#000"/><path d="M2259 433V537" stroke="#000" stroke-width="2"/><rect x="2256" y="443" width="6" height="88" fill="#000"/><path d="M2267 479V537" stroke="#000" stroke-width="2"/><rect x="2265" y="489" width="4" height="44" fill="#fff" stroke="#000" stroke-width="2"/><path d="M2275 485V550" stroke="#000" stroke-width="2"/><rect x="2272" y="497" width="6" height="18" fill="#000"/><path d="M2283 487V564" stroke="#000" stroke-width="2"/><rect x="2280" y="518" width="6" height="13" fill="#000"/><path d="M2291 527V572" stroke="#000" stroke-width="2"/><rect x="2288" y="537" width="6" height="34" fill="#000"/><path d="M2299 564V614" stroke="#000" stroke-width="2"/><rect x="2296" y="569" width="6" height="14" fill="#000"/><path d="M2307 559V602" stroke="#000" stroke-width="2"/><rect x="2304" y="585" width="6" height="11" fill="#000"/><path d="M2315 559V598" stroke="#000" stroke-width="2"/><rect x="2313" y="591" width="4" height="4" fill="#fff" stroke="#000" stroke-width="2"/><path d="M2323 573V602" stroke="#000" stroke-width="2"/><rect x="2321" y="582" width="4" height="5" fill="#fff" stroke="#000" stroke-width="2"/><path d="M2331 581V697" stroke="#000" stroke-width="2"/><rect x="2328" y="583" width="6" height="93" fill="#000"/><path d="M2339 603V687" stroke="#000" stroke-width="2"/><rect x="2337" y="606" width="4" height="79" fill="#fff" stroke="#000" stroke-width="2"/><path d="M2347 537V616" stroke="#000" stroke-width="2"/><rect x="2345" y="549" width="4" height="60" fill="#fff" stroke="#000" stroke-width="2"/><path d="M2355 541V590" stroke="#000" stroke-width="2"/><rect x="2352" y="546" width="6" height="44" fill="#000"/><path d="M2363 579V627" stroke="#000" stroke-width="2"/><rect x="2360" y="587" width="6" height="38" fill="#000"/><path d="M2371 603V642" stroke="#000" stroke-width="2"/><rect x="2368" y="624" width="6" height="6" fill="#000"/><path d="M2379 605V664" stroke="#000" stroke-width="2"/><rect x="2377" y="625" width="4" height="4" fill="#fff" stroke="#000" stroke-width="2"/><path d="M2387 595V640" stroke="#000" stroke-width="2"/><rect x="2385" y="609" width="4" height="18" fill="#fff" stroke="#000" stroke-width="2"/><path d="M2395 553V612" stroke="#000" stroke-width="2"/><rect x="2393" y="563" width="4" height="46" fill="#fff" stroke="#000" stroke-width="2"/><path d="M2403 509V576" stroke="#000" stroke-width="2"/><rect x="2401" y="543" width="4" height="20" fill="#fff" stroke="#000" stroke-width="2"/><path d="M2411 509V542" stroke="#000" stroke-width="2"/><rect x="2409" y="520" width="4" height="20" fill="#fff" stroke="#000" stroke-width="2"/><path d="M2419 514V584" stroke="#000" stroke-width="2"/><rect x="2416" y="523" width="6" height="48" fill="#000"/><path d="M2427 555V620" stroke="#000" stroke-width="2"/><rect x="2424" y="571" width="6" height="27" fill="#000"/><path d="M2435 581V641" stroke="#000" stroke-width="2"/><rect x="2432" y="602" width="6" height="38" fill="#000"/><path d="M2443 622V688" stroke="#000" stroke-width="2"/><rect x="2440" y="637" width="6" height="50" fill="#000"/><path d="M2451 663V737" stroke="#000" stroke-width="2"/><rect x="2448" y="681" width="6" height="54" fill="#000"/><path d="M2459 658V736" stroke="#000" stroke-width="2"/><rect x="2457" y="664" width="4" height="70" fill="#fff" stroke="#000" stroke-width="2"/><path d="M2467 643V697" stroke="#000" stroke-width="2"/><rect x="2464" y="669" width="6" height="15" fill="#000"/><path d="M2475 632V700" stroke="#000" stroke-width="2"/><rect x="2473" y="644" width="4" height="36" fill="#fff" stroke="#000" stroke-width="2"/><path d="M2483 618V648" stroke="#000" stroke-width="2"/><rect x="2481" y="626" width="4" height="15" fill="#fff" stroke="#000" stroke-width="2"/><path d="M2491 613V680" stroke="#000" stroke-width="2"/><rect x="2488" y="627" width="6" height="33" fill="#000"/><path d="M2499 605V672" stroke="#000" stroke-width="2"/><rect x="2497" y="647" width="4" height="16" fill="#fff" stroke="#000" stroke-width="2"/><path d="M2507 622V664" stroke="#000" stroke-width="2"/><rect x="2504" y="648" width="6" height="16" fill="#000"/><path d="M2515 658V748" stroke="#000" stroke-width="2"/><rect x="2512" y="663" width="6" height="75" fill="#000"/><path d="M2523 703V740" stroke="#000" stroke-width="2"/><rect x="2521" y="704" width="4" height="35" fill="#fff" stroke="#000" stroke-width="2"/><path d="M2531 632V706" stroke="#000" stroke-width="2"/><rect x="2529" y="683" width="4" height="20" fill="#fff" stroke="#000" stroke-width="2"/><path d="M2539 642V698" stroke="#000" stroke-width="2"/><rect x="2537" y="663" width="4" height="18" fill="#fff" stroke="#000" stroke-width="2"/><path d="M2547 617V672" stroke="#000" stroke-width="2"/><rect x="2544" y="666" width="6" height="7" fill="#000"/><path d="M2129.500 317.700L2634.500 656.500M2153.300 575L2700 941" stroke="#0000ff" stroke-width="5" shape-rendering="auto"/><path d="M2538 173h18l-9 9z" fill="#c0c0c0"/><path d="M2418 888V856H2441V888M2418 878H2441M2444 856V888" fill="#fff" stroke="#000" stroke-width="2"/><path d="M2450 888V856H2500L2506 867L2500 878H2450" fill="#fff" stroke="#000" stroke-width="2"/><path d="M2546 888V856H2596L2602 867L2596 878H2546" fill="#fff" stroke="#000" stroke-width="2"/></g><g clip-path="url(#aum)"><path d="M2491 893V1067" stroke="#000" stroke-width="2" stroke-dasharray="6 6" stroke-dashoffset="2"/><path d="M2091 922V1005" stroke="#0000ff" stroke-width="2"/><path d="M2099 921V1005" stroke="#0000ff" stroke-width="2"/><path d="M2107 921V1005" stroke="#0000ff" stroke-width="2"/><path d="M2115 921V1005" stroke="#0000ff" stroke-width="2"/><path d="M2123 921V1005" stroke="#0000ff" stroke-width="2"/><path d="M2131 921V1005" stroke="#0000ff" stroke-width="2"/><path d="M2139 921V1005" stroke="#0000ff" stroke-width="2"/><path d="M2147 922V1005" stroke="#0000ff" stroke-width="2"/><path d="M2155 925V1005" stroke="#0000ff" stroke-width="2"/><path d="M2163 933V1005" stroke="#0000ff" stroke-width="2"/><path d="M2171 943V1005" stroke="#0000ff" stroke-width="2"/><path d="M2179 949V1005" stroke="#0000ff" stroke-width="2"/><path d="M2187 949V1005" stroke="#0000ff" stroke-width="2"/><path d="M2195 950V1005" stroke="#0000ff" stroke-width="2"/><path d="M2203 953V1005" stroke="#0000ff" stroke-width="2"/><path d="M2211 950V1005" stroke="#0000ff" stroke-width="2"/><path d="M2219 953V1005" stroke="#0000ff" stroke-width="2"/><path d="M2227 955V1005" stroke="#0000ff" stroke-width="2"/><path d="M2235 961V1005" stroke="#0000ff" stroke-width="2"/><path d="M2243 963V1005" stroke="#0000ff" stroke-width="2"/><path d="M2251 967V1005" stroke="#0000ff" stroke-width="2"/><path d="M2259 979V1005" stroke="#0000ff" stroke-width="2"/><path d="M2267 985V1005" stroke="#0000ff" stroke-width="2"/><path d="M2275 991V1005" stroke="#0000ff" stroke-width="2"/><path d="M2283 999V1005" stroke="#0000ff" stroke-width="2"/><path d="M2291 1007V1011" stroke="#0000ff" stroke-width="2"/><path d="M2299 1007V1019" stroke="#0000ff" stroke-width="2"/><path d="M2307 1007V1026" stroke="#0000ff" stroke-width="2"/><path d="M2315 1007V1033" stroke="#0000ff" stroke-width="2"/><path d="M2323 1007V1037" stroke="#0000ff" stroke-width="2"/><path d="M2331 1007V1047" stroke="#0000ff" stroke-width="2"/><path d="M2339 1007V1049" stroke="#0000ff" stroke-width="2"/><path d="M2347 1007V1045" stroke="#0000ff" stroke-width="2"/><path d="M2355 1007V1045" stroke="#0000ff" stroke-width="2"/><path d="M2363 1007V1047" stroke="#0000ff" stroke-width="2"/><path d="M2371 1007V1049" stroke="#0000ff" stroke-width="2"/><path d="M2379 1007V1050" stroke="#0000ff" stroke-width="2"/><path d="M2387 1007V1049" stroke="#0000ff" stroke-width="2"/><path d="M2395 1007V1044" stroke="#0000ff" stroke-width="2"/><path d="M2403 1007V1035" stroke="#0000ff" stroke-width="2"/><path d="M2411 1007V1026" stroke="#0000ff" stroke-width="2"/><path d="M2419 1007V1025" stroke="#0000ff" stroke-width="2"/><path d="M2427 1007V1026" stroke="#0000ff" stroke-width="2"/><path d="M2435 1007V1031" stroke="#0000ff" stroke-width="2"/><path d="M2443 1007V1039" stroke="#0000ff" stroke-width="2"/><path d="M2451 1007V1050" stroke="#0000ff" stroke-width="2"/><path d="M2459 1007V1050" stroke="#0000ff" stroke-width="2"/><path d="M2467 1007V1053" stroke="#0000ff" stroke-width="2"/><path d="M2475 1007V1050" stroke="#0000ff" stroke-width="2"/><path d="M2483 1007V1047" stroke="#0000ff" stroke-width="2"/><path d="M2491 1007V1044" stroke="#0000ff" stroke-width="2"/><path d="M2499 1007V1043" stroke="#0000ff" stroke-width="2"/><path d="M2507 1007V1044" stroke="#0000ff" stroke-width="2"/><path d="M2515 1007V1049" stroke="#0000ff" stroke-width="2"/><path d="M2523 1007V1050" stroke="#0000ff" stroke-width="2"/><path d="M2531 1007V1049" stroke="#0000ff" stroke-width="2"/><path d="M2539 1007V1046" stroke="#0000ff" stroke-width="2"/><path d="M2547 1007V1043" stroke="#0000ff" stroke-width="2"/><path d="" fill="none" stroke="#ff0000" stroke-width="2" stroke-dasharray="6 6"/><path d="M2179 926.1L2187 930.4M2187 930.4L2195 934.7M2195 934.7L2203 937.8M2203 937.8L2211 940.7M2211 940.7L2219 945.2M2219 945.2L2227 949.8M2227 949.8L2235 951.2M2235 951.2L2243 952.6M2243 952.6L2251 954.5M2251 954.5L2259 958.8M2259 958.8L2267 963.2M2267 963.2L2275 968.5M2275 968.5L2283 973.8M2283 973.8L2291 980.2M2291 980.2L2299 986.6M2299 986.6L2307 994.5M2307 994.5L2315 1002.5M2315 1002.5L2323 1009.8M2323 1009.8L2331 1017.0M2331 1017.0L2339 1022.7M2339 1022.7L2347 1028.0M2347 1028.0L2355 1033.2M2355 1033.2L2363 1038.3M2363 1038.3L2371 1042.2M2371 1042.2L2379 1045.2M2379 1045.2L2387 1045.4M2387 1045.4L2395 1045.4M2395 1045.4L2403 1043.7M2403 1043.7L2411 1041.6M2411 1041.6L2419 1039.4M2419 1039.4L2427 1037.2M2427 1037.2L2435 1036.3M2435 1036.3L2443 1036.2M2443 1036.2L2451 1036.2M2451 1036.2L2459 1036.3M2459 1036.3L2467 1036.7M2467 1036.7L2475 1037.4M2475 1037.4L2483 1039.6M2483 1039.6L2491 1044.2M2491 1044.2L2499 1045.1M2499 1045.1L2507 1045.8M2507 1045.8L2515 1046.7M2515 1046.7L2523 1047.6M2523 1047.6L2531 1047.1M2531 1047.1L2539 1046.2M2539 1046.2L2547 1044.5" fill="none" stroke="#ff0000" stroke-width="2" stroke-dasharray="6 6"/><path d="M2084 1067v-8l8 8z" fill="#c0c0c0"/></g><rect x="2083" y="172" width="672" height="715" fill="none" stroke="#000" stroke-width="2"/><rect x="2083" y="892.500" width="672" height="175" fill="none" stroke="#000" stroke-width="2"/><path d="M2756 184h6" stroke="#000" stroke-width="2"/><path d="M2756 248h6" stroke="#000" stroke-width="2"/><path d="M2756 312h6" stroke="#000" stroke-width="2"/><path d="M2756 376h6" stroke="#000" stroke-width="2"/><path d="M2756 440h6" stroke="#000" stroke-width="2"/><path d="M2756 504h6" stroke="#000" stroke-width="2"/><path d="M2756 568h6" stroke="#000" stroke-width="2"/><path d="M2756 632h6" stroke="#000" stroke-width="2"/><path d="M2756 696h6" stroke="#000" stroke-width="2"/><path d="M2756 760h6" stroke="#000" stroke-width="2"/><path d="M2756 824h6" stroke="#000" stroke-width="2"/><path d="M2756 893h6M2756 1066h6" stroke="#000" stroke-width="2"/><path d="M2083 1068v8" stroke="#000" stroke-width="2"/><path d="M2211 1068v8" stroke="#000" stroke-width="2"/><path d="M2339 1068v8" stroke="#000" stroke-width="2"/><path d="M2467 1068v8" stroke="#000" stroke-width="2"/></svg><svg style="left:2092px;top:183px" width="74" height="22" viewBox="0 0 74 22" shape-rendering="crispEdges" fill="none" stroke-width="2"><rect x="1" y="1" width="28" height="20" fill="#fff" stroke="none"/><rect x="4" y="6" width="10" height="10" fill="#ffe0d8" stroke="none"/><rect x="16" y="6" width="10" height="10" fill="#c0e4fc" stroke="none"/><path d="M14 1H1V21H14M4 5H14M4 11H14M4 17H14" stroke="#dc2a1e"/><path d="M14 1H29V21H14M16 5H26M16 11H26M16 17H26" stroke="#1060a8"/><path d="M43 1H49V9H55V21H43Z" fill="#ffe0d8" stroke="#dc2a1e"/><path d="M65 1H71V21H59V9H65Z" fill="#c0e4fc" stroke="#1060a8"/><rect x="53" y="1" width="8" height="4" fill="#fff" stroke="#a0a0a0"/></svg><span class="t c" style="top:183.8px;left:2174.3px;color:#000;letter-spacing:-0.15px;white-space:pre;">AUDUSD, Weekly:  Australian Dollar vs US Dollar</span><span class="t c" style="top:174.1px;left:2764.3px;color:#000;letter-spacing:-1.20px;">0.83315</span><span class="t c" style="top:238.1px;left:2764.3px;color:#000;letter-spacing:-1.20px;">0.81770</span><span class="t c" style="top:302.1px;left:2764.3px;color:#000;letter-spacing:-1.20px;">0.80225</span><span class="t c" style="top:366.1px;left:2764.3px;color:#000;letter-spacing:-1.20px;">0.78680</span><span class="t c" style="top:430.1px;left:2764.3px;color:#000;letter-spacing:-1.20px;">0.77135</span><span class="t c" style="top:494.1px;left:2764.3px;color:#000;letter-spacing:-1.20px;">0.75590</span><span class="t c" style="top:558.1px;left:2764.3px;color:#000;letter-spacing:-1.20px;">0.74045</span><span class="t c" style="top:622.1px;left:2764.3px;color:#000;letter-spacing:-1.20px;">0.72500</span><span class="t c" style="top:686.1px;left:2764.3px;color:#000;letter-spacing:-1.20px;">0.70955</span><span class="t c" style="top:750.1px;left:2764.3px;color:#000;letter-spacing:-1.20px;">0.69410</span><span class="t c" style="top:814.1px;left:2764.3px;color:#000;letter-spacing:-1.20px;">0.67865</span><span class="t c" style="top:891.1px;left:2764.3px;color:#000;letter-spacing:-1.23px;">0.022769</span><span class="t c" style="top:1045.4px;left:2764.3px;color:#000;letter-spacing:-0.93px;">-0.012108</span><span class="t c" style="top:899.1px;left:2088.3px;color:#000;letter-spacing:-0.63px;">MACD(12,26,9) -0.007056 -0.007684</span><span class="t c" style="top:1075.6px;left:2081.8px;color:#000;letter-spacing:-0.53px;">10 Jan 2021</span><span class="t c" style="top:1075.6px;left:2208.3px;color:#000;letter-spacing:-0.79px;">2 May 2021</span><span class="t c" style="top:1075.6px;left:2336.4px;color:#000;letter-spacing:-0.66px;">22 Aug 2021</span><span class="t c" style="top:1075.6px;left:2464.5px;color:#000;letter-spacing:-0.81px;">12 Dec 2021</span><span class="t c" style="top:858.6px;left:2419.8px;color:#000;letter-spacing:-1.45px;">21</span><span class="t c" style="top:858.6px;left:2452.8px;color:#000;letter-spacing:-0.77px;">20:00</span><span class="t c" style="top:858.6px;left:2548.8px;color:#000;letter-spacing:-0.77px;">22:30</span>
<div style="left:0px;top:1160px;width:2880px;height:348px;background:#e4e4e4;"></div>
<div style="left:0px;top:1162px;width:2880px;height:2px;background:#fff;"></div>
<div style="left:2px;top:1197px;width:26px;height:303px;background:linear-gradient(#c4c4c4,#808080);"></div>
<svg style="left:8px;top:1174px" width="12" height="11"><path d="M1 1L11 10M11 1L1 10" stroke="#000" stroke-width="2.6" fill="none"/></svg>
<span class="t" style="left:4px;top:1495px;color:#dcdcdc;letter-spacing:0;transform-origin:0 0;transform:rotate(-90deg);">Toolbox</span>
<div style="left:30px;top:1169px;width:2844px;height:292px;background:#808080;"></div>
<div style="left:32px;top:1171px;width:2808px;height:288px;background:#fff;overflow:hidden;"></div>
<div style="left:32px;top:1171px;width:2808px;height:288px;background:#fff;overflow:hidden;"><div style="left:0px;top:-6px;width:2808px;height:38px;background:#e3faff;"></div><div style="left:0px;top:32px;width:2808px;height:2px;background:#c0c0c0;"></div><div style="left:158px;top:-6px;width:2px;height:38px;background:#c0c0c0;"></div><div style="left:278px;top:-6px;width:2px;height:38px;background:#c0c0c0;"></div><div style="left:1656px;top:-6px;width:2px;height:38px;background:#c0c0c0;"></div><div style="left:1796px;top:-6px;width:2px;height:38px;background:#c0c0c0;"></div><div style="left:1966px;top:-6px;width:2px;height:38px;background:#c0c0c0;"></div><div style="left:2246px;top:-6px;width:2px;height:38px;background:#c0c0c0;"></div><div style="left:2526px;top:-6px;width:2px;height:38px;background:#c0c0c0;"></div><div style="left:0px;top:74px;width:2808px;height:38px;background:#dbe1fb;"></div><div style="left:0px;top:112px;width:2808px;height:2px;background:#c0c0c0;"></div><div style="left:158px;top:74px;width:2px;height:38px;background:#c0c0c0;"></div><div style="left:278px;top:74px;width:2px;height:38px;background:#c0c0c0;"></div><div style="left:1656px;top:74px;width:2px;height:38px;background:#c0c0c0;"></div><div style="left:1796px;top:74px;width:2px;height:38px;background:#c0c0c0;"></div><div style="left:1966px;top:74px;width:2px;height:38px;background:#c0c0c0;"></div><div style="left:0px;top:114px;width:2808px;height:38px;background:#e3faff;"></div><div style="left:0px;top:152px;width:2808px;height:2px;background:#c0c0c0;"></div><div style="left:158px;top:114px;width:2px;height:38px;background:#c0c0c0;"></div><div style="left:278px;top:114px;width:2px;height:38px;background:#c0c0c0;"></div><div style="left:1656px;top:114px;width:2px;height:38px;background:#c0c0c0;"></div><div style="left:1796px;top:114px;width:2px;height:38px;background:#c0c0c0;"></div><div style="left:1966px;top:114px;width:2px;height:38px;background:#c0c0c0;"></div><div style="left:2246px;top:114px;width:2px;height:38px;background:#c0c0c0;"></div><div style="left:2526px;top:114px;width:2px;height:38px;background:#c0c0c0;"></div><div style="left:0px;top:154px;width:2808px;height:38px;background:#e3faff;"></div><div style="left:0px;top:192px;width:2808px;height:2px;background:#c0c0c0;"></div><div style="left:158px;top:154px;width:2px;height:38px;background:#c0c0c0;"></div><div style="left:278px;top:154px;width:2px;height:38px;background:#c0c0c0;"></div><div style="left:1656px;top:154px;width:2px;height:38px;background:#c0c0c0;"></div><div style="left:1796px;top:154px;width:2px;height:38px;background:#c0c0c0;"></div><div style="left:1966px;top:154px;width:2px;height:38px;background:#c0c0c0;"></div><div style="left:2246px;top:154px;width:2px;height:38px;background:#c0c0c0;"></div><div style="left:2526px;top:154px;width:2px;height:38px;background:#c0c0c0;"></div><div style="left:0px;top:194px;width:2808px;height:38px;background:#e3faff;"></div><div style="left:0px;top:232px;width:2808px;height:2px;background:#c0c0c0;"></div><div style="left:158px;top:194px;width:2px;height:38px;background:#c0c0c0;"></div><div style="left:278px;top:194px;width:2px;height:38px;background:#c0c0c0;"></div><div style="left:1656px;top:194px;width:2px;height:38px;background:#c0c0c0;"></div><div style="left:1796px;top:194px;width:2px;height:38px;background:#c0c0c0;"></div><div style="left:1966px;top:194px;width:2px;height:38px;background:#c0c0c0;"></div><div style="left:2246px;top:194px;width:2px;height:38px;background:#c0c0c0;"></div><div style="left:2526px;top:194px;width:2px;height:38px;background:#c0c0c0;"></div><div style="left:0px;top:234px;width:2808px;height:38px;background:#fff;"></div><div style="left:0px;top:272px;width:2808px;height:2px;background:#c0c0c0;"></div><div style="left:158px;top:234px;width:2px;height:38px;background:#c0c0c0;"></div><div style="left:278px;top:234px;width:2px;height:38px;background:#c0c0c0;"></div><div style="left:1656px;top:234px;width:2px;height:38px;background:#c0c0c0;"></div><div style="left:1796px;top:234px;width:2px;height:38px;background:#c0c0c0;"></div><div style="left:1966px;top:234px;width:2px;height:38px;background:#c0c0c0;"></div><div style="left:2246px;top:234px;width:2px;height:38px;background:#c0c0c0;"></div><div style="left:2526px;top:234px;width:2px;height:38px;background:#c0c0c0;"></div><div style="left:0px;top:274px;width:2808px;height:38px;background:#fff;"></div><div style="left:0px;top:312px;width:2808px;height:2px;background:#c0c0c0;"></div><div style="left:158px;top:274px;width:2px;height:38px;background:#c0c0c0;"></div><div style="left:278px;top:274px;width:2px;height:38px;background:#c0c0c0;"></div><div style="left:1656px;top:274px;width:2px;height:38px;background:#c0c0c0;"></div><div style="left:1796px;top:274px;width:2px;height:38px;background:#c0c0c0;"></div><div style="left:1966px;top:274px;width:2px;height:38px;background:#c0c0c0;"></div><div style="left:2246px;top:274px;width:2px;height:38px;background:#c0c0c0;"></div><div style="left:0px;top:34px;width:2808px;height:38px;background:#fff;"></div><div style="left:0px;top:32px;width:2808px;height:2px;background:#c0c0c0;"></div><div style="left:0px;top:72px;width:2808px;height:2px;background:#c0c0c0;"></div></div>
<div style="left:0;top:1171px;width:2840px;height:288px;overflow:hidden;"><div style="left:0;top:-1171px;width:2880px;height:1508px;"><svg style="left:34px;top:1173px" width="32" height="24" viewBox="0 0 32 24"><rect width="32" height="24" fill="#f6f6f8"/><path d="M10 12a6 6 0 0 1 12 0z" fill="#e0292f"/><path d="M10 12a6 6 0 0 0 12 0z" fill="#2b3f9b"/><g fill="#555"><rect x="4" y="3" width="4" height="4"/><rect x="24" y="3" width="4" height="4"/><rect x="4" y="17" width="4" height="4"/><rect x="24" y="17" width="4" height="4"/></g></svg><span class="t" style="top:1176.2px;left:73.8px;letter-spacing:-0.21px;">23:00</span><span class="t" style="top:1176.2px;left:197.7px;letter-spacing:0.19px;">KRW</span><span class="t" style="top:1176.2px;left:317px;letter-spacing:-0.01px;">PPI y/y</span><div style="left:1748px;top:1173px;width:22px;height:22px;background:#dcdcdc;border:2px solid #a8a8a8;box-sizing:border-box;"></div><span class="t" style="top:1176.2px;right:888.3px;letter-spacing:1.16px;">Jan</span><span class="t" style="top:1176.2px;right:609.1px;letter-spacing:0.43px;">8.7%</span><span class="t" style="top:1176.2px;right:329.1px;letter-spacing:0.43px;">8.5%</span><span class="t" style="top:1176.2px;right:49.1px;letter-spacing:0.43px;">9.0%</span><svg style="left:34px;top:1253px" width="32" height="24" viewBox="0 0 32 24"><rect width="32" height="24" fill="#3a48a8"/><circle cx="16" cy="12" r="6.5" fill="none" stroke="#c8a040" stroke-width="2.4"/></svg><span class="t" style="top:1256.2px;left:73.8px;letter-spacing:-0.75px;">All day</span><span class="t" style="top:1256.2px;left:197.7px;letter-spacing:-0.25px;">EUR</span><span class="t" style="top:1256.2px;left:317px;letter-spacing:-0.51px;">EU Leaders Summit</span><div style="left:1748px;top:1253px;width:22px;height:22px;background:#ffd9cc;border:2px solid #e03a30;box-sizing:border-box;"></div><svg style="left:34px;top:1293px" width="32" height="24" viewBox="0 0 32 24"><rect width="32" height="24" fill="#3a48a8"/><rect width="20" height="14" fill="#f0d8e0"/><path d="M0 7h20M10 0v14" stroke="#e8202a" stroke-width="3.4"/><g fill="#e8e8f8"><rect x="9" y="17" width="3" height="3"/><rect x="24" y="4" width="2" height="2"/><rect x="27" y="10" width="2" height="2"/><rect x="23" y="13" width="2" height="2"/><rect x="25" y="19" width="2" height="2"/></g></svg><span class="t" style="top:1296.2px;left:73.8px;letter-spacing:-0.21px;">02:30</span><span class="t" style="top:1296.2px;left:197.7px;letter-spacing:-0.43px;">AUD</span><span class="t" style="top:1296.2px;left:317px;letter-spacing:-0.41px;">Private New Capital Expenditure q/q</span><div style="left:1748px;top:1293px;width:22px;height:22px;background:#ffd200;border:2px solid #d89a10;box-sizing:border-box;"></div><span class="t" style="top:1296.2px;right:889.6px;letter-spacing:-0.09px;">Q4</span><span class="t" style="top:1296.2px;right:609.1px;letter-spacing:0.43px;">1.1%</span><span class="t" style="top:1296.2px;right:329.0px;letter-spacing:0.52px;">-0.1%</span><span class="t" style="top:1296.2px;right:49.0px;letter-spacing:0.52px;border-bottom:2px dotted #000;height:20px;">-1.1%</span><svg style="left:34px;top:1333px" width="32" height="24" viewBox="0 0 32 24"><rect width="32" height="24" fill="#3a48a8"/><rect width="20" height="14" fill="#f0d8e0"/><path d="M0 7h20M10 0v14" stroke="#e8202a" stroke-width="3.4"/><g fill="#e8e8f8"><rect x="9" y="17" width="3" height="3"/><rect x="24" y="4" width="2" height="2"/><rect x="27" y="10" width="2" height="2"/><rect x="23" y="13" width="2" height="2"/><rect x="25" y="19" width="2" height="2"/></g></svg><span class="t" style="top:1336.2px;left:73.8px;letter-spacing:-0.21px;">02:30</span><span class="t" style="top:1336.2px;left:197.7px;letter-spacing:-0.43px;">AUD</span><span class="t" style="top:1336.2px;left:317px;letter-spacing:-0.56px;">Building Capital Expenditure q/q</span><div style="left:1748px;top:1333px;width:22px;height:22px;background:#dcdcdc;border:2px solid #a8a8a8;box-sizing:border-box;"></div><span class="t" style="top:1336.2px;right:889.6px;letter-spacing:-0.09px;">Q4</span><span class="t" style="top:1336.2px;right:609.1px;letter-spacing:0.43px;">2.2%</span><span class="t" style="top:1336.2px;right:329.0px;letter-spacing:0.52px;">-0.4%</span><span class="t" style="top:1336.2px;right:49.1px;letter-spacing:0.43px;border-bottom:2px dotted #000;height:20px;">1.0%</span><svg style="left:34px;top:1373px" width="32" height="24" viewBox="0 0 32 24"><rect width="32" height="24" fill="#3a48a8"/><rect width="20" height="14" fill="#f0d8e0"/><path d="M0 7h20M10 0v14" stroke="#e8202a" stroke-width="3.4"/><g fill="#e8e8f8"><rect x="9" y="17" width="3" height="3"/><rect x="24" y="4" width="2" height="2"/><rect x="27" y="10" width="2" height="2"/><rect x="23" y="13" width="2" height="2"/><rect x="25" y="19" width="2" height="2"/></g></svg><span class="t" style="top:1376.2px;left:73.8px;letter-spacing:-0.21px;">02:30</span><span class="t" style="top:1376.2px;left:197.7px;letter-spacing:-0.43px;">AUD</span><span class="t" style="top:1376.2px;left:317px;letter-spacing:-0.48px;">Equipment, Plant and Machinery Capital Expenditure q/q</span><div style="left:1748px;top:1373px;width:22px;height:22px;background:#dcdcdc;border:2px solid #a8a8a8;box-sizing:border-box;"></div><span class="t" style="top:1376.2px;right:889.6px;letter-spacing:-0.09px;">Q4</span><span class="t" style="top:1376.2px;right:609.0px;letter-spacing:0.52px;">-0.1%</span><span class="t" style="top:1376.2px;right:329.2px;letter-spacing:0.33px;">-12.0%</span><span class="t" style="top:1376.2px;right:49.0px;letter-spacing:0.52px;border-bottom:2px dotted #000;height:20px;">-3.3%</span><svg style="left:34px;top:1413px" width="32" height="24" viewBox="0 0 32 24"><rect width="32" height="24" fill="#f6f6f8"/><path d="M10 12a6 6 0 0 1 12 0z" fill="#e0292f"/><path d="M10 12a6 6 0 0 0 12 0z" fill="#2b3f9b"/><g fill="#555"><rect x="4" y="3" width="4" height="4"/><rect x="24" y="3" width="4" height="4"/><rect x="4" y="17" width="4" height="4"/><rect x="24" y="17" width="4" height="4"/></g></svg><span class="t" style="top:1416.2px;left:73.8px;letter-spacing:-0.21px;">03:00</span><span class="t" style="top:1416.2px;left:197.7px;letter-spacing:0.19px;">KRW</span><span class="t" style="top:1416.2px;left:317px;letter-spacing:-0.25px;">BOK Interest Rate Decision</span><div style="left:1748px;top:1413px;width:22px;height:22px;background:#ffd9cc;border:2px solid #e03a30;box-sizing:border-box;"></div><span class="t" style="top:1416.2px;right:609.3px;letter-spacing:0.23px;">1.25%</span><span class="t" style="top:1416.2px;right:49.3px;letter-spacing:0.23px;">1.25%</span><svg style="left:34px;top:1453px" width="32" height="24" viewBox="0 0 32 24"><rect width="32" height="24" fill="#f6f6f8"/><path d="M10 12a6 6 0 0 1 12 0z" fill="#e0292f"/><path d="M10 12a6 6 0 0 0 12 0z" fill="#2b3f9b"/><g fill="#555"><rect x="4" y="3" width="4" height="4"/><rect x="24" y="3" width="4" height="4"/><rect x="4" y="17" width="4" height="4"/><rect x="24" y="17" width="4" height="4"/></g></svg><div style="left:1748px;top:1453px;width:22px;height:22px;background:#ffd200;border:2px solid #d89a10;box-sizing:border-box;"></div><span class="t" style="top:1216.5px;left:38.5px;color:#ff0000;font-weight:bold;letter-spacing:0.20px;">Thursday, 24 February</span></div></div>
<div style="left:2840px;top:1171px;width:32px;height:288px;background:repeating-conic-gradient(#fff 0 25%,#e4e4e4 0 50%) 0 0/4px 4px;"></div>
<div style="left:2840px;top:1171px;width:32px;height:32px;background:#e4e4e4;box-shadow:inset -2px -2px 0 #404040, inset 2px 2px 0 #e4e4e4, inset -4px -4px 0 #808080, inset 4px 4px 0 #fff;"></div>
<div style="left:2840px;top:1285px;width:32px;height:12px;background:#e4e4e4;box-shadow:inset -2px -2px 0 #404040, inset 2px 2px 0 #e4e4e4, inset -4px -4px 0 #808080, inset 4px 4px 0 #fff;"></div>
<div style="left:2840px;top:1427px;width:32px;height:32px;background:#e4e4e4;box-shadow:inset -2px -2px 0 #404040, inset 2px 2px 0 #e4e4e4, inset -4px -4px 0 #808080, inset 4px 4px 0 #fff;"></div>
<svg style="left:2848px;top:1180px" width="16" height="10"><path d="M2 8H14L8 2Z" fill="#000"/></svg>
<svg style="left:2848px;top:1438px" width="16" height="10"><path d="M2 1H14L8 7Z" fill="#000"/></svg>
<div style="left:32px;top:1459px;width:2842px;height:2px;background:#000;"></div>
<div style="left:30px;top:1461px;width:2846px;height:38px;background:#e4e4e4;"></div>
<span class="t" style="top:1466.0px;left:56.2px;color:#404040;letter-spacing:0.42px;">Trade</span>
<span class="t" style="top:1466.0px;left:151.2px;color:#404040;letter-spacing:-0.45px;">Exposure</span>
<span class="t" style="top:1466.0px;left:281.2px;color:#404040;letter-spacing:-0.63px;">History</span>
<span class="t" style="top:1466.0px;left:389px;color:#404040;letter-spacing:-0.38px;">News</span>
<span class="t" style="top:1466.0px;left:505px;color:#404040;letter-spacing:-0.85px;">Mailbox</span>
<span class="t" style="top:1466.0px;left:757.5px;color:#404040;letter-spacing:-0.24px;">Alerts</span>
<span class="t" style="top:1466.0px;left:870px;color:#404040;letter-spacing:-0.48px;">Articles</span>
<span class="t" style="top:1466.0px;left:990px;color:#404040;letter-spacing:-0.35px;">Code Base</span>
<span class="t" style="top:1466.0px;left:1118px;color:#404040;letter-spacing:-0.45px;">Experts</span>
<span class="t" style="top:1466.0px;left:1233.8px;color:#404040;letter-spacing:0.23px;">Journal</span>
<div style="left:132px;top:1467px;width:2px;height:26px;background:#404040;"></div>
<div style="left:262px;top:1467px;width:2px;height:26px;background:#404040;"></div>
<div style="left:370px;top:1467px;width:2px;height:26px;background:#404040;"></div>
<div style="left:486px;top:1467px;width:2px;height:26px;background:#404040;"></div>
<div style="left:850px;top:1467px;width:2px;height:26px;background:#404040;"></div>
<div style="left:968px;top:1467px;width:2px;height:26px;background:#404040;"></div>
<div style="left:1110px;top:1467px;width:2px;height:26px;background:#404040;"></div>
<div style="left:1214.5px;top:1467px;width:2px;height:26px;background:#404040;"></div>
<span class="t" style="top:1481.8px;left:446.5px;color:#ff3030;font-size:13px;line-height:13px;font-weight:bold;">99</span>
<span class="t" style="top:1481.8px;left:583px;color:#ff3030;font-size:13px;line-height:13px;font-weight:bold;">7</span>
<div style="left:613px;top:1459px;width:124px;height:37px;background:#fff;border:2px solid #000;border-top:none;box-sizing:border-box;box-shadow:2px 2px 0 #808080;"></div>
<span class="t" style="top:1466.0px;left:631.7px;letter-spacing:-0.38px;">Calendar</span>
<span class="t" style="top:1474.8px;left:2430.7px;letter-spacing:-0.33px;">Market</span>
<span class="t" style="top:1474.8px;left:2561px;letter-spacing:-0.73px;">Signals</span>
<span class="t" style="top:1474.8px;left:2691.7px;letter-spacing:-0.02px;">VPS</span>
<span class="t" style="top:1474.8px;left:2792.4px;letter-spacing:0.51px;">Tester</span>
<svg style="left:2397px;top:1470px" width="24" height="27" viewBox="0 0 24 27"><path d="M7.500 9V6a4.500 4.500 0 0 1 9 0v3" fill="none" stroke="#d89a10" stroke-width="2.2"/><rect x="2" y="8" width="20" height="17.500" fill="#ffc800" stroke="#d89a10" stroke-width="2"/></svg>
<svg style="left:2522px;top:1474px" width="34" height="20" viewBox="0 0 34 20"><circle cx="17" cy="10" r="2.800" fill="#3a86c4"/><path d="M11 4.500q-3 5.500 0 11M23 4.500q3 5.500 0 11M6 1.500q-5 8.500 0 17M28 1.500q5 8.500 0 17" fill="none" stroke="#3a86c4" stroke-width="2.200"/></svg>
<svg style="left:2655px;top:1470px" width="28" height="28" viewBox="0 0 28 28"><path d="M7.500 17.500a5.500 5.500 0 0 1 0-11 7 7 0 0 1 13.500 1 4.800 4.800 0 0 1 0 10z" fill="#bfe3fb" stroke="#1464a5" stroke-width="2.200"/><path d="M14 17.500v7M7 25h14" stroke="#1464a5" stroke-width="2.200" fill="none"/></svg>
<svg style="left:2754px;top:1474px" width="30" height="26" viewBox="0 0 30 26"><path d="M15 1.500l3.500 4 5.500-1 0 5 4.500 3.500-4.500 3.500 0 5-5.500-1-3.500 4-3.500-4-5.500 1 0-5-4.500-3.500 4.500-3.500 0-5 5.500 1z" fill="#d8f5d8" stroke="#1eb01e" stroke-width="2" stroke-linejoin="round"/><path d="M10 13l3.500 3.500 7-7" fill="none" stroke="#1eb01e" stroke-width="2.200"/></svg>
<div style="left:0px;top:1501px;width:2880px;height:2.5px;background:#fff;"></div>
<div style="left:0px;top:1506px;width:2880px;height:2px;background:#909090;"></div>
<svg style="left:2808px;top:1134px" width="60" height="20"><path d="M14 3v14l-8-7z" fill="#a8a8a8"/><path d="M46 3v14l8-7z" fill="#a8a8a8"/></svg>
<div style="left:156px;top:51px;width:256px;height:196px;background:#e4e4e4;box-shadow:inset 2px 2px 0 #e4e4e4, inset -2px -2px 0 #404040, inset 4px 4px 0 #fff, inset -4px -4px 0 #808080;"></div>
<div style="left:162px;top:57px;width:246px;height:46px;background:#0a246a;"></div><span class="t" style="top:71.2px;left:217.8px;color:#fff;letter-spacing:-0.18px;">Indicators</span><svg style="left:396px;top:71px" width="10" height="18" viewBox="0 0 10 18"><path d="M0 0L10 9L0 18Z" fill="#fff"/></svg>
<span class="t" style="top:117.2px;left:217.8px;color:#000;letter-spacing:-0.11px;">Objects</span><svg style="left:396px;top:117px" width="10" height="18" viewBox="0 0 10 18"><path d="M0 0L10 9L0 18Z" fill="#000"/></svg>
<span class="t" style="top:163.2px;left:217.8px;color:#000;letter-spacing:-0.45px;">Experts</span><svg style="left:396px;top:163px" width="10" height="18" viewBox="0 0 10 18"><path d="M0 0L10 9L0 18Z" fill="#000"/></svg>
<span class="t" style="top:209.2px;left:217.8px;color:#000;letter-spacing:-0.53px;">Scripts</span><svg style="left:396px;top:209px" width="10" height="18" viewBox="0 0 10 18"><path d="M0 0L10 9L0 18Z" fill="#000"/></svg>
<div style="left:408px;top:51px;width:428px;height:490px;background:#e4e4e4;box-shadow:inset 2px 2px 0 #e4e4e4, inset -2px -2px 0 #404040, inset 4px 4px 0 #fff, inset -4px -4px 0 #808080;"></div>
<span class="t" style="top:71.2px;left:469.6px;color:#000;letter-spacing:-0.62px;">Chaikin Oscillator</span>
<span class="t" style="top:117.2px;left:469.6px;color:#000;letter-spacing:-0.43px;">Williams' Percent Range</span>
<span class="t" style="top:163.2px;left:469.6px;color:#000;letter-spacing:-0.25px;">Volumes</span>
<span class="t" style="top:209.2px;left:469.6px;color:#000;letter-spacing:-0.39px;">Variable Index Dynamic Average</span>
<span class="t" style="top:255.2px;left:469.6px;color:#000;letter-spacing:-0.46px;">Triple Exponential Moving Average</span>
<div style="left:416px;top:294px;width:416px;height:2px;background:#808080;"></div><div style="left:416px;top:296px;width:416px;height:2px;background:#fff;"></div>
<span class="t" style="top:319.2px;left:469.6px;color:#000;letter-spacing:0.44px;">Trend</span><svg style="left:820px;top:319px" width="10" height="18" viewBox="0 0 10 18"><path d="M0 0L10 9L0 18Z" fill="#000"/></svg>
<span class="t" style="top:365.2px;left:469.6px;color:#000;letter-spacing:-0.52px;">Oscillators</span><svg style="left:820px;top:365px" width="10" height="18" viewBox="0 0 10 18"><path d="M0 0L10 9L0 18Z" fill="#000"/></svg>
<span class="t" style="top:411.2px;left:469.6px;color:#000;letter-spacing:-0.25px;">Volumes</span><svg style="left:820px;top:411px" width="10" height="18" viewBox="0 0 10 18"><path d="M0 0L10 9L0 18Z" fill="#000"/></svg>
<span class="t" style="top:457.2px;left:469.6px;color:#000;letter-spacing:-1.01px;">Bill Williams</span><svg style="left:820px;top:457px" width="10" height="18" viewBox="0 0 10 18"><path d="M0 0L10 9L0 18Z" fill="#000"/></svg>
<div style="left:414px;top:489px;width:418px;height:46px;background:#0a246a;"></div><span class="t" style="top:503.2px;left:469.6px;color:#fff;letter-spacing:-0.31px;">Custom</span><svg style="left:820px;top:503px" width="10" height="18" viewBox="0 0 10 18"><path d="M0 0L10 9L0 18Z" fill="#fff"/></svg>
<div style="left:832px;top:-20px;width:334px;height:1540px;background:#e4e4e4;box-shadow:inset 2px 2px 0 #fff, inset -2px -2px 0 #404040, inset 4px 4px 0 #fff, inset -4px -4px 0 #808080;"></div>
<span class="t" style="top:5.2px;left:894px;color:#000;letter-spacing:-0.28px;">Accelerator</span>
<span class="t" style="top:51.2px;left:894px;color:#000;letter-spacing:-0.39px;">AD</span>
<span class="t" style="top:97.2px;left:894px;color:#000;letter-spacing:-0.78px;">ADX</span>
<span class="t" style="top:143.2px;left:894px;color:#000;letter-spacing:-0.48px;">ADXW</span>
<span class="t" style="top:189.2px;left:894px;color:#000;letter-spacing:-0.53px;">Alligator</span>
<span class="t" style="top:235.2px;left:894px;color:#000;letter-spacing:-0.05px;">AMA</span>
<span class="t" style="top:281.2px;left:894px;color:#000;letter-spacing:0.69px;">ASI</span>
<span class="t" style="top:327.2px;left:894px;color:#000;letter-spacing:0.78px;">ATR</span>
<span class="t" style="top:373.2px;left:894px;color:#000;letter-spacing:-0.23px;">Awesome_Oscillator</span>
<span class="t" style="top:419.2px;left:894px;color:#000;letter-spacing:-1.58px;">BB</span>
<span class="t" style="top:465.2px;left:894px;color:#000;letter-spacing:-0.47px;">Bears</span>
<span class="t" style="top:511.2px;left:894px;color:#000;letter-spacing:-1.09px;">Bulls</span>
<span class="t" style="top:557.2px;left:894px;color:#000;letter-spacing:0.09px;">BW-ZoneTrade</span>
<span class="t" style="top:603.2px;left:894px;color:#000;letter-spacing:-0.29px;">FlameChart</span>
<span class="t" style="top:649.2px;left:894px;color:#000;letter-spacing:0.84px;">CCI</span>
<span class="t" style="top:695.2px;left:894px;color:#000;letter-spacing:-0.10px;">CHO</span>
<span class="t" style="top:741.2px;left:894px;color:#000;letter-spacing:-0.08px;">CHV</span>
<span class="t" style="top:787.2px;left:894px;color:#000;letter-spacing:-0.42px;">ColorBars</span>
<span class="t" style="top:833.2px;left:894px;color:#000;letter-spacing:-0.64px;">ColorCandlesDaily</span>
<span class="t" style="top:879.2px;left:894px;color:#000;letter-spacing:-0.55px;">ColorLine</span>
<span class="t" style="top:925.2px;left:894px;color:#000;letter-spacing:-0.43px;">Custom Moving Average</span>
<span class="t" style="top:971.2px;left:894px;color:#000;letter-spacing:-0.59px;">DEMA</span>
<span class="t" style="top:1017.2px;left:894px;color:#000;letter-spacing:-0.47px;">DeMarker</span>
<span class="t" style="top:1063.2px;left:894px;color:#000;letter-spacing:-0.26px;">DPO</span>
<span class="t" style="top:1109.2px;left:894px;color:#000;letter-spacing:-0.62px;">Envelopes</span>
<span class="t" style="top:1155.2px;left:894px;color:#000;letter-spacing:0.20px;">Force_Index</span>
<span class="t" style="top:1201.2px;left:894px;color:#000;letter-spacing:-0.08px;">Fractals</span>
<span class="t" style="top:1247.2px;left:894px;color:#000;letter-spacing:0.38px;">FrAMA</span>
<span class="t" style="top:1293.2px;left:894px;color:#000;letter-spacing:-0.29px;">Gator</span>
<span class="t" style="top:1339.2px;left:894px;color:#000;letter-spacing:0.01px;">Gator_2</span>
<span class="t" style="top:1385.2px;left:894px;color:#000;letter-spacing:-0.34px;">Heiken_Ashi</span>
<span class="t" style="top:1431.2px;left:894px;color:#000;letter-spacing:-0.44px;">Ichimoku</span>
<div style="left:838px;top:1463px;width:322px;height:46px;background:#0a246a;"></div><span class="t" style="top:1477.2px;left:894px;color:#fff;letter-spacing:-0.32px;">MACD</span>
</body></html>
